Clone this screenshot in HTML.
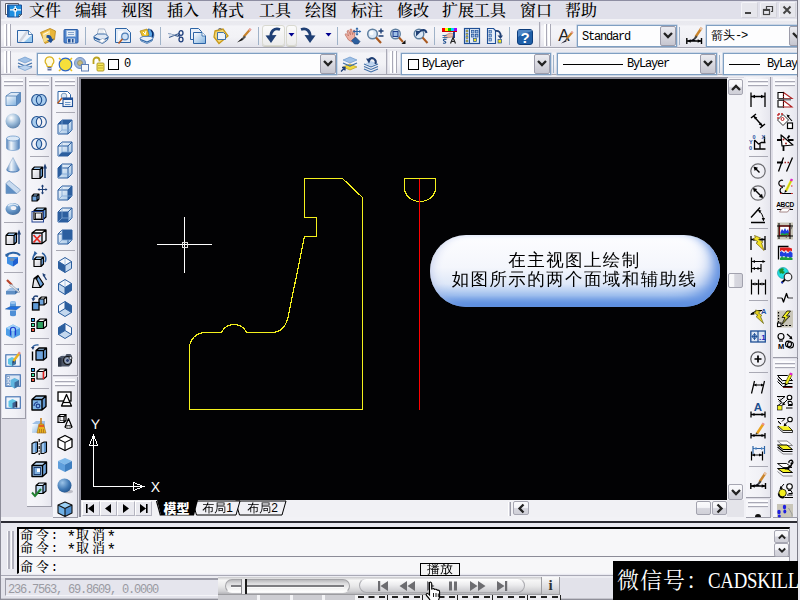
<!DOCTYPE html><html lang="zh"><head><meta charset="utf-8"><title>CAD</title><style>
*{box-sizing:border-box;margin:0;padding:0}
html,body{width:800px;height:600px;overflow:hidden;background:#dedde6;font-family:"Liberation Sans","WenQuanYi Zen Hei","Noto Sans CJK SC",sans-serif;}
.a{position:absolute}
#menubar{left:0;top:0;width:800px;height:21px;background:linear-gradient(#8e8ea2 0,#8e8ea2 1px,#e0e0ea 1px,#e0e0ea 19px,#f2f2f6 19px);}
.mi{position:absolute;top:1px;margin-left:-1px;font-size:16px;line-height:20px;color:#000;white-space:nowrap;font-family:"Liberation Serif","Noto Serif CJK SC",serif;font-weight:500}
.tb{position:absolute;background:linear-gradient(#e9e9ef 0,#eaeaf0 10%,#f4f4f8 17%,#f2f2f6 60%,#e4e4ec 100%);}
.vtb{position:absolute;background:linear-gradient(90deg,#f6f6fa,#f1f1f6 60%,#e6e6ee);}
.grip{position:absolute;width:7px;}
.grip i{position:absolute;top:0;bottom:0;width:3px;background:#fff;border-right:1px solid #a9a9b6}
.hgrip{position:absolute;height:8px;background:#e4e4ea}
.hgrip i{position:absolute;left:0;right:0;height:3px;background:#fcfcfe;border-bottom:1px solid #a9a9b6;}
.sep{position:absolute;width:1px;background:#9fb2c8;}
.hsep{position:absolute;height:1px;background:#a9a9b4;}
.dd{position:absolute;background:#fdfdfe;border:1px solid #7f9fc2;box-shadow:0 0 0 .5px #a9c0da}
.ddb{position:absolute;right:0px;top:0px;bottom:0px;width:16px;background:linear-gradient(#ececf1,#c6c6d0);border:1px solid #9c9caa;border-radius:2px}

.mono{position:absolute;font-family:"Liberation Mono","WenQuanYi Zen Hei Mono","Noto Sans Mono CJK SC",monospace;font-size:10px;line-height:12px;color:#000;white-space:nowrap}
svg{position:absolute;overflow:visible}
.ic{position:absolute;width:16px;height:16px}
</style></head><body>
<svg width="0" height="0" style="left:0;top:0"><defs>
<linearGradient id="gb" x1="0" y1="0" x2="1" y2="1"><stop offset="0" stop-color="#ffffff"/><stop offset="1" stop-color="#7fb0de"/></linearGradient>
<linearGradient id="gb2" x1="0" y1="0" x2="1" y2="1"><stop offset="0" stop-color="#e8f1fa"/><stop offset="1" stop-color="#4f86c0"/></linearGradient>
<linearGradient id="gw" x1="0" y1="0" x2="1" y2="1"><stop offset="0" stop-color="#ffffff"/><stop offset="1" stop-color="#c9c9d2"/></linearGradient>
<linearGradient id="gcyl" x1="0" y1="0" x2="1" y2="0"><stop offset="0" stop-color="#4f7fb8"/><stop offset=".35" stop-color="#f4f8fc"/><stop offset=".6" stop-color="#b4cce6"/><stop offset="1" stop-color="#4f7fb8"/></linearGradient>
<radialGradient id="gsph" cx=".38" cy=".3" r=".75"><stop offset="0" stop-color="#ffffff"/><stop offset=".55" stop-color="#9bbbd9"/><stop offset="1" stop-color="#5a7fa8"/></radialGradient>
<radialGradient id="gsph2" cx=".35" cy=".3" r=".8"><stop offset="0" stop-color="#9cc4e8"/><stop offset=".6" stop-color="#3f78b4"/><stop offset="1" stop-color="#1f4f86"/></radialGradient>
<linearGradient id="gpill" x1="0" y1="0" x2="0" y2="1"><stop offset="0" stop-color="#ffffff"/><stop offset=".55" stop-color="#e8eef8"/><stop offset=".8" stop-color="#a9c6ee"/><stop offset="1" stop-color="#5b8ede"/></linearGradient>
<linearGradient id="gbtn" x1="0" y1="0" x2="0" y2="1"><stop offset="0" stop-color="#fdfdfd"/><stop offset=".5" stop-color="#e4e4e6"/><stop offset="1" stop-color="#b9b9bd"/></linearGradient>
</defs></svg>
<div id="menubar" class="a">
<span class="mi" style="left:30px">文件</span>
<span class="mi" style="left:76px">编辑</span>
<span class="mi" style="left:122px">视图</span>
<span class="mi" style="left:168px">插入</span>
<span class="mi" style="left:213px">格式</span>
<span class="mi" style="left:260px">工具</span>
<span class="mi" style="left:306px">绘图</span>
<span class="mi" style="left:352px">标注</span>
<span class="mi" style="left:398px">修改</span>
<span class="mi" style="left:443px">扩展工具</span>
<span class="mi" style="left:521px">窗口</span>
<span class="mi" style="left:566px">帮助</span>
</div>
<svg class="a" style="left:4px;top:2px" width="19" height="17" viewBox="0 0 19 17"><rect x="0.500" y="0.500" width="18" height="16.500" fill="#ececf4"/><path d="M1.500 1.500h13v11h-13z" fill="#fff" stroke="#5c5c66" stroke-width="1"/><path d="M3.500 3h14v9.500l-2.500 2.500H3.500z" fill="#1f8fe0" stroke="#1f4f96" stroke-width="1"/><path d="M3.500 3h2v12h-2z" fill="#1f5fa8"/><path d="M11.200 4v10.500M6 7.800h11" stroke="#fff" stroke-width="1.300"/><rect x="9.500" y="6" width="3.400" height="3.600" fill="#fff"/><circle cx="11.300" cy="7.600" r=".8" fill="#000"/><path d="M15 15v-2.500h2.500z" fill="#f4f4f4" stroke="#333" stroke-width=".6"/></svg>
<div class="a" style="left:741px;top:2px;width:17px;height:16px;background:#e6e6ec;border:1px solid #d2d2da;border-top-color:#f4f4f8;border-left-color:#f4f4f8;border-radius:2px"></div>
<div class="a" style="left:760px;top:2px;width:17px;height:16px;background:#e6e6ec;border:1px solid #d2d2da;border-top-color:#f4f4f8;border-left-color:#f4f4f8;border-radius:2px"></div>
<div class="a" style="left:779px;top:2px;width:17px;height:16px;background:#e6e6ec;border:1px solid #d2d2da;border-top-color:#f4f4f8;border-left-color:#f4f4f8;border-radius:2px"></div>
<svg class="a" style="left:741px;top:2px" width="56" height="16" viewBox="0 0 56 16"><rect x="4" y="10" width="6" height="2" fill="#444"/><path d="M25.5 7V4.5h6v5H30" fill="none" stroke="#444" stroke-width="1.2"/><rect x="22.5" y="7.5" width="6" height="5" fill="none" stroke="#444" stroke-width="1.2"/><rect x="22" y="7" width="7" height="2" fill="#444"/><path d="M42.5 4.5l7 7M49.5 4.5l-7 7" stroke="#444" stroke-width="2"/></svg>
<div class="a" style="left:0px;top:21px;width:800px;height:1px;background:#e9e9ef;"></div>
<div class="tb" style="left:1px;top:22px;width:538px;height:25px"></div>
<div class="a" style="left:539px;top:22px;width:1px;height:25px;background:#a9a9b6;"></div>
<div class="tb" style="left:541px;top:22px;width:259px;height:25px"></div>
<div class="a" style="left:0px;top:47px;width:800px;height:1px;background:#a6a6b2;"></div>
<div class="a" style="left:0px;top:48px;width:800px;height:1px;background:#f6f6fa;"></div>
<div class="tb" style="left:1px;top:49px;width:385px;height:25px"></div>
<div class="a" style="left:386px;top:49px;width:1px;height:25px;background:#a9a9b6;"></div>
<div class="tb" style="left:388px;top:49px;width:412px;height:25px"></div>
<div class="a" style="left:0px;top:74px;width:800px;height:1px;background:#a6a6b2;"></div>
<div class="a" style="left:0px;top:75px;width:800px;height:2px;background:#eeeef3;"></div>
<div class="grip" style="left:4px;top:24px;height:22px"><i style="left:0"></i><i style="left:4px"></i></div>
<div class="grip" style="left:544px;top:24px;height:22px"><i style="left:0"></i><i style="left:4px"></i></div>
<div class="grip" style="left:4px;top:51px;height:22px"><i style="left:0"></i><i style="left:4px"></i></div>
<div class="grip" style="left:390px;top:51px;height:22px"><i style="left:0"></i><i style="left:4px"></i></div>
<div class="sep" style="left:553px;top:55px;height:18px"></div>
<div class="sep" style="left:719px;top:55px;height:18px"></div>
<div class="sep" style="left:85px;top:27px;height:18px"></div>
<div class="sep" style="left:160px;top:27px;height:18px"></div>
<div class="sep" style="left:258px;top:27px;height:18px"></div>
<div class="sep" style="left:337px;top:27px;height:18px"></div>
<div class="sep" style="left:434px;top:27px;height:18px"></div>
<div class="sep" style="left:509px;top:27px;height:18px"></div>
<svg class="ic" style="left:516.5px;top:28.5px" width="15" height="15" viewBox="0 0 16 16"><rect x="0.500" y="0.500" width="15" height="15" rx="2.500" fill="#1f5fa8" stroke="#0d3d7c"/><path d="M1 8c4-4 9-4 14-6v-1H1z" fill="#6fa0d8" opacity=".6"/><text x="8" y="13.500" font-family="Liberation Sans,sans-serif" font-size="15" font-weight="bold" fill="#fff" text-anchor="middle">?</text></svg>
<div class="a" style="left:262px;top:25px;width:23px;height:21px;background:linear-gradient(#fbfbfb,#ececec);border:1px solid #d9d9d0;border-radius:3px;box-shadow:0 1px 0 #c9c9c0"></div>
<div class="a" style="left:286px;top:25px;width:11px;height:21px;background:linear-gradient(#fbfbfb,#ececec);border:1px solid #d9d9d0;border-radius:3px;box-shadow:0 1px 0 #c9c9c0"></div>
<svg class="ic" style="left:265px;top:26.5px" width="19" height="19" viewBox="0 0 16 16"><path d="M15 2.500C9 .5 5.500 4.500 6 9.500" fill="none" stroke="#1f3f74" stroke-width="2.800"/><path d="M.5 8.500l11-.5-5.500 8z" fill="#1f3f74"/></svg>
<svg class="ic" style="left:17px;top:27.5px" width="16" height="16" viewBox="0 0 16 16"><path d="M0.500 2.500h11l4 4v8H0.500z" fill="#eef3fa" stroke="#2c64a6"/><path d="M1 14L9 3h3L4 14z" fill="#c9ccd6" opacity=".8"/><path d="M7 14l8-7v7z" fill="#8fc4ec" opacity=".9"/><path d="M11.500 2.500v4h4" fill="#fff" stroke="#2c64a6" stroke-width=".8"/></svg>
<svg class="ic" style="left:40px;top:27.5px" width="16" height="16" viewBox="0 0 16 16"><path d="M.5 4.500l9.500-4 5.500 2.500-1 8.500-9.500 4z" fill="#e9b63a" stroke="#b9851a" stroke-width=".8"/><path d="M2.500 5.500l7.500-3.500v9l-6.500 3.500z" fill="#f7dc8a"/><path d="M3.500 6.500l5-2.500" stroke="#fff" stroke-width=".8"/><path d="M6.500 7.500c3-1.500 5.500.5 5.500 3.500l2-.5-3 4.500-4-2.500 2-.5c0-1.500-1-2.500-2.500-2z" fill="#1f4f96"/></svg>
<svg class="ic" style="left:63px;top:27.5px" width="16" height="16" viewBox="0 0 16 16"><rect x="1" y="1.500" width="14" height="13.500" rx="1" fill="#4f84cc" stroke="#2c5fa8"/><rect x="3.500" y="2.500" width="9" height="6" fill="#e6eef8" stroke="#9fb9d9" stroke-width=".6"/><path d="M5 4.500h6M5 6.500h6" stroke="#6f93c2" stroke-width=".8"/><rect x="4" y="10.500" width="8" height="4.500" fill="#c9d6e8"/><rect x="5" y="11" width="2.500" height="3.500" fill="#1f4f96"/><rect x="9" y="11" width="1.500" height="3.500" fill="#1f4f96"/></svg>
<svg class="ic" style="left:92.5px;top:27.5px" width="16" height="16" viewBox="0 0 16 16"><path d="M4 8l1.500-7h6l2.500 6z" fill="#fff" stroke="#8fa0b8" stroke-width=".8"/><path d="M6.500 3h4M6 5h5" stroke="#c4ccd8" stroke-width=".7"/><path d="M.8 8.500l3.500-2.500h8l3 2.500-.8 3.500-5 3.500-8-3.500z" fill="#dfe8f4" stroke="#3f6fa8" stroke-width="1"/><path d="M1 9.500l8 3.500 6-3.500" fill="none" stroke="#2c5f9f" stroke-width="1.400"/><path d="M5.500 13l4-2.500 3.500 1.500-4 3z" fill="#fff" stroke="#8fa0b8" stroke-width=".6"/></svg>
<svg class="ic" style="left:115px;top:27.5px" width="16" height="16" viewBox="0 0 16 16"><path d="M0.500 0.500h11l4 4v10H0.500z" fill="#e3ecf7" stroke="#2c64a6"/><path d="M3 13L9 3h-6z" fill="#fff" opacity=".7"/><circle cx="10" cy="8.500" r="3.300" fill="#cfe2f6" stroke="#4f7fb8" stroke-width="1.200"/><path d="M7.500 11l-4 4.500" stroke="#b9581f" stroke-width="1.600"/></svg>
<svg class="ic" style="left:138.5px;top:27.5px" width="16" height="16" viewBox="0 0 16 16"><path d="M9 1a6 6 0 0 1 5 9l-5-2z" fill="#5aa7e6" stroke="#1f4f96" stroke-width=".8"/><path d="M12 2c2 2 2 5 1 7" stroke="#0d2f6c" stroke-width="1.400" fill="none"/><path d="M1 3l7-2 2 6-6 3z" fill="#e9c02a" stroke="#a9851a" stroke-width=".7"/><path d="M4 4l2 2m1-3l-1 4" stroke="#fff" stroke-width="1"/><path d="M1 10l3-1.500h8l2 1.500-1 3-5 2.500-6-2.500z" fill="#e6eef8" stroke="#4f7fb8" stroke-width=".9"/><path d="M1.500 11.500l6.500 2.500 5.500-2.500" fill="none" stroke="#2c64a6" stroke-width="1.200"/></svg>
<svg class="ic" style="left:167.5px;top:27.5px" width="16" height="16" viewBox="0 0 16 16"><path d="M0.500 5.500l10 3M1 9.500l10-4" stroke="#3f5f8f" stroke-width="1.200"/><path d="M1 5.300l6 2-6 .4z" fill="#c9d6e8"/><ellipse cx="13" cy="5" rx="2" ry="2.300" fill="none" stroke="#1f3f7c" stroke-width="1.300"/><ellipse cx="13" cy="11.500" rx="2" ry="2.300" fill="none" stroke="#1f3f7c" stroke-width="1.300"/><path d="M10 7l2 1.500" stroke="#1f3f7c" stroke-width="1.300"/></svg>
<svg class="ic" style="left:190px;top:27.5px" width="16" height="16" viewBox="0 0 16 16"><path d="M0.500 0.500h8l3 3v8H0.500z" fill="#e9f0f9" stroke="#2c64a6"/><path d="M3.500 4.500h8.500l3.500 3.500v7.500H3.500z" fill="url(#gb)" stroke="#2c64a6"/><path d="M12 4.500v3.500h3.500" fill="#fff" stroke="#2c64a6" stroke-width=".8"/></svg>
<svg class="ic" style="left:213px;top:27.5px" width="16" height="16" viewBox="0 0 16 16"><path d="M2 3l8-2 5 7-9 7.500L1 9z" fill="#f3d777" stroke="#c99a1a" stroke-width="1.300"/><path d="M5 1.500q2-2.500 4 0" fill="none" stroke="#777" stroke-width="1"/><path d="M4.500 4.500h6l2 2v5h-8z" fill="#eef3fa" stroke="#2c64a6" stroke-width=".9"/></svg>
<svg class="ic" style="left:236px;top:27.5px" width="16" height="16" viewBox="0 0 16 16"><path d="M14.500 1l-7 8" stroke="#c9832a" stroke-width="2.200"/><path d="M14.800 .8l-1.500 1.800" stroke="#e9a0a0" stroke-width="2.200"/><path d="M8.500 7.500l-3 3 1.500 1.500 3-3z" fill="#555"/><path d="M6 10l-5 4.500 6-2.500z" fill="#111"/></svg>
<svg class="ic" style="left:344px;top:27.5px" width="16" height="16" viewBox="0 0 16 16"><path d="M1 6.500l1.200-1 2.300 2.500-1.500-5 1.500-.7 2 4.500-.5-5.500 1.600-.2 1 5.500 1-4.500 1.500.4-.6 6 1.500 2-4 3.500-3.500-2z" fill="#eeb0a2" stroke="#b9685a" stroke-width=".7"/><path d="M7.500 12.500l4-3.500 4.500 4.500-2 2.500h-3.500z" fill="#2c5f9f" stroke="#1f3f74" stroke-width=".6"/><path d="M13 .5v6M10 3.500h6" stroke="#2c64a6" stroke-width="1.200"/><path d="M13 -.8l1.600 2h-3.200zM13 7.800l1.600-2h-3.200zM8.700 3.500l2-1.600v3.200zM17.300 3.500l-2-1.600v3.200z" fill="#2c64a6"/></svg>
<svg class="ic" style="left:367px;top:27.5px" width="16" height="16" viewBox="0 0 16 16"><circle cx="5.500" cy="6" r="4.800" fill="#dbe8f6" stroke="#5f7f9f" stroke-width="1.500"/><circle cx="4.500" cy="5" r="2.200" fill="#fff" opacity=".8"/><path d="M9 9.500l5 5.500" stroke="#a9581f" stroke-width="2.200"/><path d="M11.500 3h5M14 .5v5M11.500 8h5" stroke="#1f3f74" stroke-width="1.400"/></svg>
<svg class="ic" style="left:390px;top:27.5px" width="16" height="16" viewBox="0 0 16 16"><circle cx="5.500" cy="6" r="4.800" fill="#dbe8f6" stroke="#5f7f9f" stroke-width="1.400"/><rect x="3" y="3.500" width="5" height="5" fill="#9fc0e6" stroke="#1f3f8f" stroke-width="1.100"/><path d="M9 9.500l4 4.500" stroke="#a9581f" stroke-width="2"/><path d="M15.500 12v4h-4z" fill="#111"/></svg>
<svg class="ic" style="left:412.5px;top:27.5px" width="16" height="16" viewBox="0 0 16 16"><circle cx="6" cy="6" r="4.800" fill="#dbe8f6" stroke="#5f7f9f" stroke-width="1.400"/><path d="M9.500 9.500l5 5.500" stroke="#a9581f" stroke-width="2"/><path d="M13.500 5C13 1.500 9 1 7 3.500" fill="none" stroke="#1f3f74" stroke-width="2"/><path d="M3 3h5.500v5.500z" fill="#1f3f74" transform="rotate(-90 5.750 5.750)"/></svg>
<svg class="ic" style="left:441px;top:27.5px" width="16" height="16" viewBox="0 0 16 16"><path d="M1 0h3v3H1z" fill="#f00"/><path d="M4 0h3v3H4z" fill="#ff0"/><path d="M7 0h3v3H7z" fill="#0c0"/><path d="M10 0h3v3h-3z" fill="#0cf"/><path d="M13 0h3v3h-3z" fill="#90f"/><path d="M1 3.500h15" stroke="#c00" stroke-width="1"/><path d="M3 8l6-3 4 1-2 3-6 1z" fill="#e9b7a6" stroke="#a9685a" stroke-width=".6"/><path d="M13 4v6" stroke="#1f3f8f" stroke-width="2"/><path d="M1.500 7.500h4M1.500 9.500h5" stroke="#3f6f9f" stroke-width="1"/><path d="M5.500 11.500c-3-1-4 1-2 1.800 2 .7 1.500 2.500-1.500 1.700" fill="none" stroke="#1f4f8f" stroke-width="1.200"/><path d="M9.500 15.500l2.500-6 2.500 6M10.300 13.500h3.400" fill="none" stroke="#222" stroke-width="1.200"/></svg>
<svg class="ic" style="left:464px;top:27.5px" width="16" height="16" viewBox="0 0 16 16"><rect x="0.500" y="0.500" width="15" height="15" fill="#e6eef8" stroke="#1f4f96" stroke-width="1.200"/><path d="M5.500 1v14" stroke="#1f4f96" stroke-width="1"/><g fill="#f3d21f" stroke="#1f4f96" stroke-width=".5"><rect x="2" y="2" width="2" height="2"/><rect x="2" y="5.300" width="2" height="2"/><rect x="2" y="8.600" width="2" height="2"/><rect x="2" y="12" width="2" height="2"/></g><g fill="#9fc0e6" stroke="#1f4f96" stroke-width=".7"><rect x="7.500" y="2.500" width="2.500" height="2.500"/><rect x="11.500" y="2.500" width="2.500" height="2.500"/><rect x="7.500" y="6.500" width="2.500" height="2.500"/><rect x="11.500" y="6.500" width="2.500" height="2.500"/></g><rect x="9.500" y="10.500" width="3" height="3" fill="#f3e21f" stroke="#1f4f96" stroke-width=".7"/></svg>
<svg class="ic" style="left:487px;top:27.5px" width="16" height="16" viewBox="0 0 16 16"><path d="M0.500 0.500h6l2 2v13h-8z" fill="#e6eef8" stroke="#1f4f96" stroke-width="1.100"/><g fill="#9fc0e6" stroke="#1f4f96" stroke-width=".6"><rect x="2" y="2.500" width="2.500" height="2.500"/><rect x="2" y="6.500" width="2.500" height="2.500"/><rect x="2" y="10.500" width="2.500" height="2.500"/></g><path d="M8 3c4-1 6 2 5.500 5" fill="none" stroke="#1f3f74" stroke-width="1.800"/><path d="M10.500 7.500h5.500l-2.500 3.500z" fill="#1f3f74"/><rect x="11" y="11.500" width="3.500" height="3.500" fill="#f3e21f" stroke="#1f4f96" stroke-width=".7"/></svg>
<svg class="ic" style="left:300px;top:26.5px" width="19" height="19" viewBox="0 0 16 16"><path d="M1 2.500C7 .5 10.500 4.500 10 9.500" fill="none" stroke="#1f3f74" stroke-width="2.800"/><path d="M15.500 8.500l-11-.5 5.500 8z" fill="#1f3f74"/></svg>
<svg class="a" style="left:288px;top:33px" width="8" height="4"><path d="M0.500 0h6L3.500 3.500z" fill="#00008f"/></svg>
<svg class="a" style="left:325px;top:33px" width="8" height="4"><path d="M0.500 0h6L3.500 3.500z" fill="#00008f"/></svg>
<svg class="ic" style="left:558px;top:28px" width="16" height="16" viewBox="0 0 16 16"><text x="5.800" y="13" font-size="17" fill="#222" text-anchor="middle" font-family="Liberation Sans,sans-serif">A</text><path d="M14.500 4l-6 7" stroke="#c9832a" stroke-width="2"/><path d="M14.800 3.700l-1.200 1.400" stroke="#e9a0a0" stroke-width="2"/><path d="M9 10l-2 2 1 1 2-2z" fill="#555"/><path d="M7.500 12l-4.500 3.500 5.500-2z" fill="#223"/></svg>
<div class="dd" style="left:577px;top:25px;width:100px;height:22px"><span class="mono" style="left:4px;top:5px;font-size:12px;letter-spacing:-1.200px">Standard</span><div class="ddb"><svg style="left:2px;top:5px" width="10" height="7" viewBox="0 0 10 7"><path d="M1 1l4 4 4-4" fill="none" stroke="#222" stroke-width="2.300"/></svg></div></div>
<div class="sep" style="left:679px;top:27px;height:18px"></div>
<svg class="ic" style="left:686px;top:28px" width="16" height="16" viewBox="0 0 16 16"><path d="M15.500 0l-6 9" stroke="#c9832a" stroke-width="2.400"/><path d="M15.800 -.5l-1.500 2.200" stroke="#e9c0a0" stroke-width="2.400"/><path d="M10 7.500l-2.500 3 1.500 1.200 2.500-3z" fill="#444"/><path d="M8 10.500l-5 2.500h6.500z" fill="#112"/><path d="M0.800 10v6M15.500 10v6M1 13h14.500" stroke="#000" stroke-width="1.400" fill="none"/><path d="M1.200 13l3.500-1.800v3.600zM15.200 13l-3.500-1.800v3.600z" fill="#000"/></svg>
<div class="dd" style="left:706px;top:25px;width:100px;height:22px"><span class="mono" style="left:4px;top:3px;font-size:12px;line-height:14px">箭头<span style="letter-spacing:-1.200px">-&gt;</span></span><div class="ddb"><svg style="left:2px;top:5px" width="10" height="7" viewBox="0 0 10 7"><path d="M1 1l4 4 4-4" fill="none" stroke="#222" stroke-width="2.300"/></svg></div></div>
<svg class="ic" style="left:17px;top:56px" width="16" height="16" viewBox="0 0 16 16"><path d="M8 1l7 3-7 3-7-3z" fill="#9fc0e6" stroke="#5f8fc4" stroke-width=".6"/><path d="M1 7l7 3 7-3M1 10l7 3 7-3" fill="none" stroke="#3f6fa8" stroke-width="1.300"/><path d="M1 13l7 3 7-3-7-2.500z" fill="#bcd3ee" stroke="#5f8fc4" stroke-width=".6" transform="translate(0,-1.500)"/></svg>
<div class="dd" style="left:37px;top:53px;width:300px;height:22px"><svg style="left:6px;top:2px" width="70" height="17" viewBox="0 0 70 17"><path d="M5.500 .8a4.300 4.300 0 0 1 3 7.400l-.7 2.300h-4.600l-.7-2.300a4.300 4.300 0 0 1 3-7.400z" fill="#fffbe0" stroke="#d9b21f" stroke-width="1.200"/><rect x="3.500" y="11" width="4" height="3.500" fill="#5f6f9f"/><path d="M3.500 12.500h4" stroke="#fff" stroke-width=".6"/><circle cx="21.500" cy="8.500" r="6.300" fill="#f6df3a" stroke="#2c64c6" stroke-width="1.200"/><path d="M15 2l2 2M28 2l-2 2M15 15l2-2M28 15l-2-2" stroke="#e9c21f" stroke-width="1.500"/><circle cx="36" cy="7" r="5.500" fill="#9fb6d9" stroke="#6f8fc4" stroke-width="1"/><circle cx="36" cy="7" r="2.500" fill="#c9b97a" stroke="#8f8f6f" stroke-width=".8"/><rect x="37.500" y="8.500" width="7" height="6.500" fill="#f4f6fa" stroke="#5f7fb4" stroke-width="1"/><path d="M49.500 8V4.500a3 3 0 0 1 6 0V5.500" fill="none" stroke="#b9a21f" stroke-width="1.800"/><rect x="53" y="7" width="7" height="8" rx="1" fill="#f3e45a" stroke="#a9921f" stroke-width=".9"/><path d="M54 9.500h5M54 12h5" stroke="#b9a21f" stroke-width=".8"/></svg><div class="a" style="left:70px;top:5px;width:11px;height:11px;border:1px solid #000;background:#fff"></div><span class="mono" style="left:86px;top:4px;font-size:12px">0</span><div class="ddb"><svg style="left:2px;top:5px" width="10" height="7" viewBox="0 0 10 7"><path d="M1 1l4 4 4-4" fill="none" stroke="#222" stroke-width="2.300"/></svg></div></div>
<svg class="ic" style="left:341px;top:56px" width="16" height="16" viewBox="0 0 16 16"><path d="M8 6l7 3-7 3-7-3z" fill="#f3d83a" stroke="#a9921f" stroke-width=".6" transform="translate(1,2)"/><path d="M9 1l7 3-7 3-7-3z" fill="#9fc0e6" stroke="#5f8fc4" stroke-width=".6"/><path d="M2 7l7 3 7-3" fill="none" stroke="#3f6fa8" stroke-width="1.200"/><path d="M0 15.500l3.500-3.500M1 11.500h3v3" fill="none" stroke="#1f3f74" stroke-width="1.300"/></svg>
<svg class="ic" style="left:363px;top:56px" width="16" height="16" viewBox="0 0 16 16"><path d="M1 8l7 3 7-3M1 10.500l7 3 7-3M1 13l7 3 7-3" fill="none" stroke="#3f6fa8" stroke-width="1.100"/><path d="M8 5l6 2.500-6 2.500-6-2.500z" fill="#bcd3ee"/><path d="M12.500 8C14 3 9 .5 6 3.500" fill="none" stroke="#1f3f74" stroke-width="2"/><path d="M3 2.500l5 .5-2 4.500z" fill="#1f3f74"/></svg>
<div class="dd" style="left:401px;top:53px;width:150px;height:22px"><div class="a" style="left:6px;top:5px;width:11px;height:11px;border:1px solid #000;background:#fff"></div><span class="mono" style="left:20px;top:4px;font-size:12px;letter-spacing:-1.200px">ByLayer</span><div class="ddb"><svg style="left:2px;top:5px" width="10" height="7" viewBox="0 0 10 7"><path d="M1 1l4 4 4-4" fill="none" stroke="#222" stroke-width="2.300"/></svg></div></div>
<div class="dd" style="left:557px;top:53px;width:160px;height:22px"><div class="a" style="left:5px;top:10px;width:60px;height:1px;background:#000"></div><span class="mono" style="left:69px;top:4px;font-size:12px;letter-spacing:-1.200px">ByLayer</span><div class="ddb"><svg style="left:2px;top:5px" width="10" height="7" viewBox="0 0 10 7"><path d="M1 1l4 4 4-4" fill="none" stroke="#222" stroke-width="2.300"/></svg></div></div>
<div class="dd" style="left:723px;top:53px;width:100px;height:22px"><div class="a" style="left:5px;top:10px;width:31px;height:1px;background:#000"></div><span class="mono" style="left:43px;top:4px;font-size:12px;letter-spacing:-1.200px">ByLayer</span><div class="ddb"><svg style="left:2px;top:5px" width="10" height="7" viewBox="0 0 10 7"><path d="M1 1l4 4 4-4" fill="none" stroke="#222" stroke-width="2.300"/></svg></div></div>
<div class="a" style="left:79px;top:77px;width:649px;height:2px;background:#8c8c98;"></div>
<div class="a" style="left:79px;top:77px;width:2px;height:440px;background:#8c8c98;"></div>
<div class="a" style="left:81px;top:79px;width:646px;height:421px;background:#020204;"></div>
<svg class="a" style="left:0;top:0" width="800" height="600" viewBox="0 0 800 600" shape-rendering="crispEdges">
<path d="M304.500 178.500H342.500L362.500 197.500V409.500H189.500V348.500A15.500 15.500 0 0 1 205 332.500H221.500A13.800 13.800 0 0 1 246.500 332.500H272Q285.500 332 288.500 315L304.500 236.500H316.500V217.500H304.500Z" fill="none" stroke="#f4f01c" stroke-width="1.200"/>
<path d="M404.500 178.500H435.500V188A15.500 13.500 0 0 1 404.500 188Z" fill="none" stroke="#f4f01c" stroke-width="1.200"/>
<path d="M419.500 179V409.500" stroke="#f00" stroke-width="1.300"/>
<path d="M157 244.500H212M184.500 217V272.500" stroke="#fff" stroke-width="1"/>
<rect x="182" y="242" width="5" height="5" fill="none" stroke="#ddd" stroke-width="1"/>
<g stroke="#fff" stroke-width="1" fill="none">
<path d="M93.500 486.500V435M93.500 486.500H143"/>
<path d="M93.500 435l-4 10h8zM143.500 486.500l-10-4v8z"/>
</g>
<text x="95.500" y="428.500" font-size="14" fill="#fff" text-anchor="middle" font-family="Liberation Sans,sans-serif" style="text-rendering:geometricPrecision">Y</text>
<text x="155.500" y="492" font-size="14" fill="#fff" text-anchor="middle" font-family="Liberation Sans,sans-serif">X</text>
</svg>
<div class="a" style="left:430px;top:235px;width:290px;height:72px;border-radius:36px;background:linear-gradient(#fdfdff 0%,#f4f6fc 45%,#dfe8f8 68%,#a9c6f0 84%,#5f92e0 96%,#4f84d8 100%);box-shadow:inset -12px -10px 16px -6px #5f8fe0, inset -6px 0 8px -4px #8fb0ea, inset 8px 0 10px -6px #c9d2ee"></div>
<div class="a" style="left:429px;top:250.500px;width:291px;text-align:center;font-size:17.500px;letter-spacing:1.400px;line-height:19.300px;color:#000;white-space:nowrap;font-family:'Liberation Sans','WenQuanYi Zen Hei','Noto Sans CJK SC',sans-serif">在主视图上绘制<br>如图所示的两个面域和辅助线</div>
<div class="a" style="left:727px;top:78px;width:17px;height:422px;background:#f4f4f8;"></div>
<div class="a" style="left:728px;top:79px;width:15px;height:16px;background:linear-gradient(#fafafc 0%,#f4f4f8 45%,#d6d6de 55%,#d0d0d8 100%);border:1px solid #a6a6b2;border-radius:2px"><svg style="left:1.5px;top:3.5px;transform:rotate(180deg) scale(1)" width="10" height="7" viewBox="0 0 10 7"><path d="M1 1l4 4 4-4" fill="none" stroke="#222" stroke-width="2.300"/></svg></div>
<div class="a" style="left:728px;top:484px;width:15px;height:16px;background:linear-gradient(#fafafc 0%,#f4f4f8 45%,#d6d6de 55%,#d0d0d8 100%);border:1px solid #a6a6b2;border-radius:2px"><svg style="left:1.5px;top:3.5px;transform:rotate(0deg) scale(1)" width="10" height="7" viewBox="0 0 10 7"><path d="M1 1l4 4 4-4" fill="none" stroke="#222" stroke-width="2.300"/></svg></div>
<div class="a" style="left:728px;top:273px;width:15px;height:15px;background:linear-gradient(90deg,#fafafc 0%,#f6f6f8 35%,#d8d8e0 45%,#d2d2da 100%);border:1px solid #a2a2ae;border-radius:2px"></div>
<div class="a" style="left:81px;top:500px;width:646px;height:17px;background:#f1f1f5;"></div>
<div class="a" style="left:727px;top:500px;width:17px;height:17px;background:#e4e4ea;"></div>
<div class="a" style="left:508px;top:502px;width:3px;height:14px;background:#cfcfd8;border-left:1px solid #fff;border-right:1px solid #9c9ca8"></div>
<div class="a" style="left:513px;top:501px;width:16px;height:14px;background:linear-gradient(#fafafc 0%,#f4f4f8 45%,#d6d6de 55%,#d0d0d8 100%);border:1px solid #a6a6b2;border-radius:2px"><svg style="left:2px;top:2.5px;transform:rotate(90deg) scale(1)" width="10" height="7" viewBox="0 0 10 7"><path d="M1 1l4 4 4-4" fill="none" stroke="#222" stroke-width="2.300"/></svg></div>
<div class="a" style="left:712px;top:501px;width:15px;height:14px;background:linear-gradient(#fafafc 0%,#f4f4f8 45%,#d6d6de 55%,#d0d0d8 100%);border:1px solid #a6a6b2;border-radius:2px"><svg style="left:1.5px;top:2.5px;transform:rotate(-90deg) scale(1)" width="10" height="7" viewBox="0 0 10 7"><path d="M1 1l4 4 4-4" fill="none" stroke="#222" stroke-width="2.300"/></svg></div>
<div class="a" style="left:696px;top:501px;width:15px;height:14px;background:linear-gradient(#fafafc 0%,#f4f4f8 45%,#d6d6de 55%,#d0d0d8 100%);border:1px solid #a2a2ae;border-radius:2px"></div>
<div class="a" style="left:82px;top:501px;width:17.500px;height:15px;background:#e9e9ef;border:1px solid #b4b4c0;border-left-color:#fff;border-top-color:#fff"></div>
<div class="a" style="left:99.5px;top:501px;width:17.500px;height:15px;background:#e9e9ef;border:1px solid #b4b4c0;border-left-color:#fff;border-top-color:#fff"></div>
<div class="a" style="left:117px;top:501px;width:17.500px;height:15px;background:#e9e9ef;border:1px solid #b4b4c0;border-left-color:#fff;border-top-color:#fff"></div>
<div class="a" style="left:134.5px;top:501px;width:17.500px;height:15px;background:#e9e9ef;border:1px solid #b4b4c0;border-left-color:#fff;border-top-color:#fff"></div>
<svg class="a" style="left:82px;top:501px" width="72" height="15" viewBox="0 0 72 15"><g fill="#000">
<path d="M4 3h1.600v9H4zM12 3v9L6 7.500z"/><path d="M29 3v9L23 7.500z"/><path d="M41 3v9l6-4.500z"/><path d="M58 3v9l6-4.500zM64 3h1.600v9H64z"/></g></svg>
<svg class="a" style="left:155px;top:500px" width="140" height="17" viewBox="0 0 140 17">
<path d="M80.500 1h50.500l-4 14H84.500z" fill="#f1f1f5" stroke="#000" stroke-width="1"/>
<path d="M37.500 1h47.500l-4 14H41.500z" fill="#f1f1f5" stroke="#000" stroke-width="1"/>
<path d="M2 0h41l-4 15.500H6z" fill="#000"/><path d="M1.500 1l4 14.500" stroke="#000" stroke-width="1.200"/>
<text x="21.500" y="12.500" font-size="13" font-weight="900" fill="#fff" text-anchor="middle" font-family="Liberation Sans,Noto Sans CJK SC,sans-serif">模型</text>
<text x="62.500" y="12" font-size="12" fill="#000" text-anchor="middle" font-family="Liberation Sans,WenQuanYi Zen Hei,Noto Sans CJK SC,sans-serif">布局1</text>
<text x="107.500" y="12" font-size="12" fill="#000" text-anchor="middle" font-family="Liberation Sans,WenQuanYi Zen Hei,Noto Sans CJK SC,sans-serif">布局2</text>
</svg>
<div class="a" style="left:0px;top:517px;width:800px;height:4px;background:#f2f2f6;"></div>
<div class="a" style="left:0px;top:521px;width:798px;height:2px;background:#2c2c34;"></div>
<div class="a" style="left:0px;top:523px;width:800px;height:1px;background:#c4c4cc;"></div>
<div class="a" style="left:0px;top:523px;width:800px;height:54px;background:#e9e9f0;"></div>
<div class="a" style="left:17px;top:527px;width:773px;height:47px;background:#f7f7f9;border-left:2px solid #000;border-top:2px solid #000;border-right:1px solid #9c9ca8;border-bottom:1px solid #f4f4f8"></div>
<div class="a" style="left:19px;top:556px;width:770px;height:1px;background:#8c8c98;"></div>
<div class="a" style="left:7px;top:531px;width:3px;height:38px;background:#fafafc;border-right:2px solid #b0b0bc"></div>
<div class="a" style="left:11px;top:531px;width:3px;height:38px;background:#fafafc;border-right:2px solid #b0b0bc"></div>
<div class="a" style="left:18.500px;top:529px;height:13px;font-size:13px;line-height:13px;color:#000;white-space:nowrap;font-family:'Liberation Mono','Noto Serif CJK SC',monospace;font-weight:500"><span style="position:absolute;left:0px;width:16px;text-align:center;">命</span><span style="position:absolute;left:16px;width:16px;text-align:center;">令</span><span style="position:absolute;left:32px;width:8px;text-align:center;">:</span><span style="position:absolute;left:48px;width:8px;text-align:center;top:3px;font-size:16px;">*</span><span style="position:absolute;left:56px;width:16px;text-align:center;">取</span><span style="position:absolute;left:72px;width:16px;text-align:center;">消</span><span style="position:absolute;left:88px;width:8px;text-align:center;top:3px;font-size:16px;">*</span></div>
<div class="a" style="left:18.500px;top:541.5px;height:13px;font-size:13px;line-height:13px;color:#000;white-space:nowrap;font-family:'Liberation Mono','Noto Serif CJK SC',monospace;font-weight:500"><span style="position:absolute;left:0px;width:16px;text-align:center;">命</span><span style="position:absolute;left:16px;width:16px;text-align:center;">令</span><span style="position:absolute;left:32px;width:8px;text-align:center;">:</span><span style="position:absolute;left:48px;width:8px;text-align:center;top:3px;font-size:16px;">*</span><span style="position:absolute;left:56px;width:16px;text-align:center;">取</span><span style="position:absolute;left:72px;width:16px;text-align:center;">消</span><span style="position:absolute;left:88px;width:8px;text-align:center;top:3px;font-size:16px;">*</span></div>
<div class="a" style="left:18.500px;top:561px;height:13px;font-size:13px;line-height:13px;color:#000;white-space:nowrap;font-family:'Liberation Mono','Noto Serif CJK SC',monospace;font-weight:500"><span style="position:absolute;left:0px;width:16px;text-align:center;">命</span><span style="position:absolute;left:16px;width:16px;text-align:center;">令</span><span style="position:absolute;left:32px;width:8px;text-align:center;">:</span></div>
<div class="a" style="left:774px;top:530px;width:15px;height:13px;background:linear-gradient(#fafafc 0%,#f4f4f8 45%,#d6d6de 55%,#d0d0d8 100%);border:1px solid #a6a6b2;border-radius:2px"><svg style="left:1.5px;top:2px;transform:rotate(180deg) scale(0.8)" width="10" height="7" viewBox="0 0 10 7"><path d="M1 1l4 4 4-4" fill="none" stroke="#222" stroke-width="2.300"/></svg></div>
<div class="a" style="left:774px;top:543px;width:15px;height:14px;background:linear-gradient(#fafafc 0%,#f4f4f8 45%,#d6d6de 55%,#d0d0d8 100%);border:1px solid #a6a6b2;border-radius:2px"><svg style="left:1.5px;top:2.5px;transform:rotate(0deg) scale(0.8)" width="10" height="7" viewBox="0 0 10 7"><path d="M1 1l4 4 4-4" fill="none" stroke="#222" stroke-width="2.300"/></svg></div>
<div class="a" style="left:0px;top:575px;width:800px;height:1px;background:#a9a9b6;"></div>
<div class="a" style="left:0px;top:576px;width:800px;height:2px;background:#ececf2;"></div>
<div class="a" style="left:0px;top:578px;width:800px;height:22px;background:#e2e2ea;"></div>
<div class="a" style="left:5px;top:578px;width:214px;height:18px;border:1px solid #9c9ca8;border-top:2px solid #9c9ca8;border-right-color:#f4f4f8;border-bottom-color:#f4f4f8;background:#e5e5ed"></div>
<span class="mono" style="left:8px;top:584px;font-size:12px;letter-spacing:-1.200px;color:#9a9aa2">236.7563, 69.8609, 0.0000</span>
<div class="a" style="left:0px;top:598px;width:613px;height:1px;background:#c4c4cc;"></div>
<div class="a" style="left:0px;top:599px;width:613px;height:1px;background:#90909a;"></div>
<div class="a" style="left:218px;top:577px;width:342px;height:18px;background:linear-gradient(#c9c9cc 0%,#f6f6f6 18%,#e9e9ea 50%,#cfcfd2 80%,#a9a9ae 100%)"></div>
<div class="a" style="left:225px;top:579px;width:125px;height:14px;border-radius:7px;background:linear-gradient(#b9b9bc,#dcdcde 30%,#f4f4f4 75%,#fff);border:1px solid #a4a4a8;border-bottom-color:#f8f8f8"></div>
<div class="a" style="left:231px;top:585px;width:113px;height:2px;background:#7c7c80;border-bottom:1px solid #fafafa;height:3px"></div>
<div class="a" style="left:241px;top:579px;width:4px;height:15px;background:#ececee;border-left:1px solid #8c8c90"></div>
<div class="a" style="left:245px;top:579px;width:2px;height:15px;background:#1c1c1c;"></div>
<div class="a" style="left:359px;top:578px;width:166px;height:15px;border-radius:8px;background:linear-gradient(#ffffff,#ececee 45%,#c9c9cd 100%);border:1px solid #a9a9ae;border-top-color:#d9d9dc"></div>
<svg class="a" style="left:370px;top:579px" width="150" height="14" viewBox="0 0 150 14"><g fill="#6c6c70">
<path d="M8 2h2.200v10H8zM18 2v10L10.500 7z"/>
<path d="M37 2v10L29.500 7zM45 2v10L37.500 7z"/>
<path d="M57 2v10l7.500-5z"/>
<path d="M79 2.500h3v9h-3zM84 2.500h3v9h-3z"/>
<path d="M100 2v10l7.500-5zM108 2v10l7.500-5z"/>
<path d="M127 2v10l7.500-5zM135 2h2.200v10H135z"/>
</g></svg>
<div class="a" style="left:541px;top:577px;width:19px;height:18px;background:linear-gradient(#fafafa,#dcdcdf 60%,#bcbcc0);border-left:1px solid #9c9ca0;border-right:1px solid #9c9ca0"></div>
<span class="a" style="left:541px;top:577px;width:19px;text-align:center;font:bold 15px/17px 'Liberation Serif',serif;color:#333">i</span>
<div class="a" style="left:218px;top:594px;width:140px;height:6px;background:#cdcdd2;"></div>
<div class="a" style="left:218px;top:594px;width:342px;height:1px;background:#9c9ca0;"></div>
<div class="a" style="left:257px;top:595px;width:3px;height:5px;background:#f4f4f6;"></div>
<div class="a" style="left:290px;top:595px;width:3px;height:5px;background:#f4f4f6;"></div>
<div class="a" style="left:322px;top:595px;width:3px;height:5px;background:#f4f4f6;"></div>
<div class="a" style="left:355px;top:595px;width:3px;height:5px;background:#f4f4f6;"></div>
<div class="a" style="left:358px;top:595px;width:202px;height:5px;background:#ececf0;"></div>
<div class="a" style="left:358px;top:596px;width:27px;height:2px;background:transparent;border-top:2px dashed #222;height:0"></div>
<div class="a" style="left:387px;top:595px;width:1px;height:5px;background:#222;"></div>
<div class="a" style="left:392px;top:596px;width:28px;height:2px;background:transparent;border-top:2px dashed #222;height:0"></div>
<div class="a" style="left:422px;top:595px;width:1px;height:5px;background:#222;"></div>
<div class="a" style="left:428px;top:596px;width:27px;height:2px;background:transparent;border-top:2px dashed #222;height:0"></div>
<div class="a" style="left:457px;top:595px;width:1px;height:5px;background:#222;"></div>
<div class="a" style="left:462px;top:596px;width:28px;height:2px;background:transparent;border-top:2px dashed #222;height:0"></div>
<div class="a" style="left:492px;top:595px;width:1px;height:5px;background:#222;"></div>
<div class="a" style="left:497px;top:596px;width:28px;height:2px;background:transparent;border-top:2px dashed #222;height:0"></div>
<div class="a" style="left:527px;top:595px;width:1px;height:5px;background:#222;"></div>
<div class="a" style="left:530px;top:596px;width:28px;height:2px;background:transparent;border-top:2px dashed #222;height:0"></div>
<div class="a" style="left:560px;top:595px;width:1px;height:5px;background:#222;"></div>
<div class="a" style="left:420px;top:563px;width:40px;height:13px;background:#f4f4f4;border:1px solid #000;font-size:13px;line-height:11px;text-align:center;color:#000;overflow:hidden;font-family:'Liberation Sans','WenQuanYi Zen Hei','Noto Sans CJK SC',sans-serif"><span style="position:relative;top:-1px">播放</span></div>
<svg class="a" style="left:424px;top:581px" width="20" height="20" viewBox="0 0 20 20"><path d="M5.500 1.500c1.200-.8 2.200 0 2.200 1.200V8l1-.3c.8-.3 1.500 0 1.800.7l1-.2c.8-.1 1.500.3 1.700 1l.8-.1c1 0 1.600.6 1.600 1.600V15c0 1.500-.5 2.500-1 4v1H6.500c-1-2-2.500-4-4-5.500-.8-1-.2-2 .8-2 .8 0 1.500.6 2.200 1.500z" fill="#fff" stroke="#000" stroke-width="1.100"/><path d="M9.500 12v4M12 12v4M14.300 12.500v3.500" stroke="#000" stroke-width=".9"/></svg>
<div class="a" style="left:613px;top:561px;width:187px;height:39px;background:#000;"></div>
<div class="a" style="left:617px;top:567px;height:28px;font-size:22px;line-height:28px;color:#fff;white-space:nowrap;font-family:'Liberation Serif','Noto Serif CJK SC',serif"><span style="letter-spacing:1px">微信号</span><span style="display:inline-block;width:22px">：</span><span style="display:inline-block;font-size:23px;letter-spacing:-.300px;transform:scaleX(.818);transform-origin:0 50%">CADSKILL</span></div>
<div class="a" style="left:0px;top:0px;width:1px;height:600px;background:#8c8c98;"></div>
<div class="a" style="left:798px;top:0px;width:2px;height:600px;background:#e9e9f0;"></div>
<div class="a" style="left:797px;top:0px;width:1px;height:561px;background:#7c7c88;"></div>
<div class="vtb" style="left:2px;top:77px;width:23px;height:341px"></div><div class="a" style="left:25px;top:77px;width:1px;height:342px;background:#9c9ca8;"></div><div class="a" style="left:2px;top:418px;width:23px;height:1px;background:#9c9ca8;"></div>
<div class="vtb" style="left:27px;top:77px;width:24px;height:429px"></div><div class="a" style="left:51px;top:77px;width:1px;height:430px;background:#9c9ca8;"></div><div class="a" style="left:27px;top:506px;width:24px;height:1px;background:#9c9ca8;"></div>
<div class="vtb" style="left:53px;top:77px;width:24px;height:298px"></div><div class="a" style="left:77px;top:77px;width:1px;height:299px;background:#9c9ca8;"></div><div class="a" style="left:53px;top:375px;width:24px;height:1px;background:#9c9ca8;"></div>
<div class="vtb" style="left:53px;top:377px;width:24px;height:140px"></div><div class="a" style="left:77px;top:377px;width:1px;height:141px;background:#9c9ca8;"></div><div class="a" style="left:53px;top:517px;width:24px;height:1px;background:#9c9ca8;"></div>
<div class="hgrip" style="left:4px;top:79px;width:19px"><i style="top:0"></i><i style="top:4px"></i></div>
<div class="hgrip" style="left:29px;top:79px;width:20px"><i style="top:0"></i><i style="top:4px"></i></div>
<div class="hgrip" style="left:55px;top:79px;width:20px"><i style="top:0"></i><i style="top:4px"></i></div>
<div class="hgrip" style="left:55px;top:379px;width:20px"><i style="top:0"></i><i style="top:4px"></i></div>
<div class="vtb" style="left:746px;top:77px;width:24px;height:420px"></div><div class="a" style="left:770px;top:77px;width:1px;height:421px;background:#9c9ca8;"></div><div class="a" style="left:746px;top:497px;width:24px;height:1px;background:#9c9ca8;"></div>
<div class="vtb" style="left:746px;top:499px;width:24px;height:18px"></div><div class="a" style="left:770px;top:499px;width:1px;height:19px;background:#9c9ca8;"></div><div class="a" style="left:746px;top:517px;width:24px;height:1px;background:#9c9ca8;"></div>
<div class="vtb" style="left:773px;top:77px;width:24px;height:280px"></div><div class="a" style="left:797px;top:77px;width:1px;height:281px;background:#9c9ca8;"></div><div class="a" style="left:773px;top:357px;width:24px;height:1px;background:#9c9ca8;"></div>
<div class="vtb" style="left:773px;top:359px;width:24px;height:158px"></div><div class="a" style="left:797px;top:359px;width:1px;height:159px;background:#9c9ca8;"></div><div class="a" style="left:773px;top:517px;width:24px;height:1px;background:#9c9ca8;"></div>
<div class="hgrip" style="left:748px;top:79px;width:20px"><i style="top:0"></i><i style="top:4px"></i></div>
<div class="hgrip" style="left:775px;top:79px;width:20px"><i style="top:0"></i><i style="top:4px"></i></div>
<div class="hgrip" style="left:748px;top:500px;width:20px"><i style="top:0"></i><i style="top:4px"></i></div>
<div class="hgrip" style="left:775px;top:361px;width:20px"><i style="top:0"></i><i style="top:4px"></i></div>
<div class="a" style="left:744px;top:77px;width:2px;height:440px;background:#f1f1f6;"></div>
<div class="hsep" style="left:4px;top:222px;width:19px"></div>
<div class="hsep" style="left:4px;top:272px;width:19px"></div>
<div class="hsep" style="left:4px;top:344px;width:19px"></div>
<div class="hsep" style="left:30px;top:156px;width:19px"></div>
<div class="hsep" style="left:30px;top:338px;width:19px"></div>
<div class="hsep" style="left:30px;top:388px;width:19px"></div>
<div class="hsep" style="left:56px;top:112px;width:19px"></div>
<div class="hsep" style="left:56px;top:250px;width:19px"></div>
<div class="hsep" style="left:56px;top:344px;width:19px"></div>
<div class="hsep" style="left:749px;top:156px;width:19px"></div>
<div class="hsep" style="left:749px;top:228px;width:19px"></div>
<div class="hsep" style="left:749px;top:300px;width:19px"></div>
<div class="hsep" style="left:749px;top:372px;width:19px"></div>
<div class="hsep" style="left:749px;top:466px;width:19px"></div>
<svg class="ic" style="left:5px;top:91px" width="16" height="16" viewBox="0 0 16 16"><path d="M1 5l5-3.500h9.500l-4 3.500z" fill="#dbe8f6"/><path d="M1 5h10.500v9.500H1z" fill="url(#gb)"/><path d="M11.500 5l4-3.500v9.500l-4 3.500z" fill="#5f8fc4"/><path d="M1 5h10.500v9.500H1zM1 5l5-3.500h9.500v9.500l-4 3.500M11.500 5l4-3.500" fill="none" stroke="#4f7fb4" stroke-width=".8"/></svg>
<svg class="ic" style="left:5px;top:113px" width="16" height="16" viewBox="0 0 16 16"><circle cx="8" cy="8" r="7.500" fill="url(#gsph)"/></svg>
<svg class="ic" style="left:5px;top:135px" width="16" height="16" viewBox="0 0 16 16"><path d="M1.500 3.500v9.500a6.500 2.500 0 0 0 13 0V3.500z" fill="url(#gcyl)" stroke="#5f8fc4" stroke-width=".6"/><ellipse cx="8" cy="3.500" rx="6.500" ry="2.500" fill="#dbe8f6" stroke="#5f8fc4" stroke-width=".7"/></svg>
<svg class="ic" style="left:5px;top:157px" width="16" height="16" viewBox="0 0 16 16"><path d="M8 .5L1.500 12.500a6.500 2.500 0 0 0 13 0z" fill="url(#gcyl)" stroke="#7f9fc4" stroke-width=".5"/><path d="M2 13a6 2 0 0 0 12 0" fill="none" stroke="#4f7fb8" stroke-width="1"/></svg>
<svg class="ic" style="left:5px;top:179px" width="16" height="16" viewBox="0 0 16 16"><path d="M1 4.500l3-3L15.500 11l-3.500 3.500z" fill="#c9dbef"/><path d="M1 4.500L12 14.500H1z" fill="#5f8fc4"/><path d="M1 4.500l3-3L15.500 11l-3.500 3.500H1z" fill="none" stroke="#6f93bf" stroke-width=".7"/></svg>
<svg class="ic" style="left:5px;top:201px" width="16" height="16" viewBox="0 0 16 16"><ellipse cx="8" cy="8" rx="7.500" ry="6" fill="url(#gsph2)" opacity=".85"/><ellipse cx="8.500" cy="7" rx="2.800" ry="2" fill="#f1f1f6"/><path d="M3 5c3-3 8-2 10 0" stroke="#dbe8f6" stroke-width="1.500" fill="none"/></svg>
<svg class="ic" style="left:5px;top:229px" width="16" height="16" viewBox="0 0 16 16"><path d="M1 6.5h8v9h-8z" fill="url(#gw)"/><path d="M1 6.5l2.5 -2.5h8l-2.5 2.5z" fill="#9cc6ee"/><path d="M9 6.5l2.5 -2.5v9l-2.5 2.5z" fill="#6fa4dc"/><path d="M1 6.5h8v9h-8zM1 6.5l2.5 -2.5h8v9l-2.5 2.5M9 6.5l2.5 -2.5" fill="none" stroke="#000" stroke-width="1.2" stroke-linejoin="round"/><path d="M14 15V5" stroke="#1f3f74" stroke-width="1.600"/><path d="M14 .5l2 5h-4z" fill="#1f3f74"/></svg>
<svg class="ic" style="left:5px;top:251px" width="16" height="16" viewBox="0 0 16 16"><path d="M2 6h11v6l-5 3.500-6-3z" fill="#3f8fe6"/><path d="M8 9l5-2v5l-5 3.500z" fill="#1f5fd0"/><ellipse cx="7" cy="8.500" rx="2.500" ry="1.700" fill="#6f8fb4"/><path d="M1 5.500C3 1 12 .5 15 4.500" fill="none" stroke="#2c64a6" stroke-width="2"/><path d="M0 3l4-.5-1 4z" fill="#2c64a6"/></svg>
<svg class="ic" style="left:5px;top:279px" width="16" height="16" viewBox="0 0 16 16"><path d="M1 12l4-3h9l-4 3z" fill="#9fc0e6"/><path d="M1 12h9v3.500H1z" fill="#5f8fc4"/><path d="M10 12l4-3v3.500l-4 3z" fill="#3f6fa8"/><path d="M2 1l5 5" stroke="#b9452a" stroke-width="2.200"/><path d="M6 5l9 8-1.500.5-9-7z" fill="#dfe4ea" stroke="#7f8fa4" stroke-width=".6"/></svg>
<svg class="ic" style="left:5px;top:301px" width="16" height="16" viewBox="0 0 16 16"><path d="M5 1.500a3 1.200 0 0 1 6 0V6H5z" fill="#5f9fe0"/><ellipse cx="8" cy="1.800" rx="3" ry="1.200" fill="#9fc6ee"/><path d="M0.500 8l5-2.500h10L11 9z" fill="#1f6fe0" stroke="#2c64a6" stroke-width=".6"/><path d="M5 9.500v4.500a3 1.200 0 0 0 6 0V9.500z" fill="#4f8fd6"/></svg>
<svg class="ic" style="left:5px;top:323px" width="16" height="16" viewBox="0 0 16 16"><path d="M1 5l7-3.500 7 3.500v7l-7 3.500-7-3.500z" fill="#4f9fe8"/><path d="M1 5l7 3.500 7-3.500-7-3.500z" fill="#9fd0f6"/><path d="M8 8.500V16" stroke="#dbe8f6" stroke-width=".8"/><path d="M5.500 6.500v6M10.500 6.500v6M5.500 6.500c0-3 5-3 5 0" stroke="#1f3fd0" stroke-width="1.200" fill="none"/></svg>
<svg class="ic" style="left:5px;top:352px" width="16" height="16" viewBox="0 0 16 16"><rect x="0.800" y="2.800" width="14.500" height="11.500" fill="#eef3fa" stroke="#3f6fb0" stroke-width="1.100"/><path d="M3 7l4-2 4 2v5l-4 2-4-2z" fill="#5fc6e6"/><path d="M7 9v5l4-2V7z" fill="#3f6f9f"/><path d="M14.500 1l-6 8" stroke="#e9b21f" stroke-width="2.400"/><path d="M15 .3l-1.200 1.600" stroke="#e98a8a" stroke-width="2.400"/><path d="M8.500 9l-1 2 2-1z" fill="#333"/></svg>
<svg class="ic" style="left:5px;top:373px" width="16" height="16" viewBox="0 0 16 16"><rect x="0.800" y="1.800" width="14.500" height="11.500" fill="#dbe6f4" stroke="#3f6fb0" stroke-width="1.100"/><g fill="#fff" stroke="#3f6fb0" stroke-width=".5"><rect x="2" y="3.500" width="2.500" height="2"/><rect x="2" y="7" width="2.500" height="2"/><rect x="2" y="10.500" width="2.500" height="2"/></g><path d="M5.500 7l4-2 4.500 2v6l-4.500 2.500-4-2.500z" fill="#5fb6e0"/><path d="M9.500 9.500v6L14 13V7z" fill="#3f6f9f"/></svg>
<svg class="ic" style="left:5px;top:395px" width="16" height="16" viewBox="0 0 16 16"><rect x="0.800" y="1.800" width="14.500" height="11.500" fill="#eef3fa" stroke="#3f6fb0" stroke-width="1.100"/><path d="M3.500 6l4-2 4 2v5.500l-4 2-4-2z" fill="#5fc6e6"/><path d="M7.500 8v5.500l4-2V6z" fill="#3f5f8f"/><path d="M11.500 6.500v6" stroke="#223" stroke-width="1.500"/></svg>
<svg class="ic" style="left:31px;top:91.5px" width="16" height="16" viewBox="0 0 16 16"><ellipse cx="5.700" cy="8" rx="5" ry="5.500" fill="#a9cdee"/><ellipse cx="10.300" cy="8" rx="5" ry="5.500" fill="#a9cdee"/><path d="M8 3.200a5 5.500 0 0 1 0 9.600a5 5.500 0 0 1 0-9.600z" fill="#a9cdee"/><ellipse cx="5.700" cy="8" rx="5" ry="5.500" fill="none" stroke="#1f4f8f" stroke-width="1.100"/><ellipse cx="10.300" cy="8" rx="5" ry="5.500" fill="none" stroke="#1f4f8f" stroke-width="1.100"/></svg>
<svg class="ic" style="left:31px;top:113.5px" width="16" height="16" viewBox="0 0 16 16"><ellipse cx="5.700" cy="8" rx="5" ry="5.500" fill="#a9cdee"/><ellipse cx="10.300" cy="8" rx="5" ry="5.500" fill="#f1f1f6"/><path d="M8 3.200a5 5.500 0 0 1 0 9.600a5 5.500 0 0 1 0-9.600z" fill="#f1f1f6"/><ellipse cx="5.700" cy="8" rx="5" ry="5.500" fill="none" stroke="#1f4f8f" stroke-width="1.100"/><ellipse cx="10.300" cy="8" rx="5" ry="5.500" fill="none" stroke="#1f4f8f" stroke-width="1.100"/></svg>
<svg class="ic" style="left:31px;top:135.5px" width="16" height="16" viewBox="0 0 16 16"><ellipse cx="5.700" cy="8" rx="5" ry="5.500" fill="#f1f1f6"/><ellipse cx="10.300" cy="8" rx="5" ry="5.500" fill="#f1f1f6"/><path d="M8 3.200a5 5.500 0 0 1 0 9.600a5 5.500 0 0 1 0-9.600z" fill="#a9cdee"/><ellipse cx="5.700" cy="8" rx="5" ry="5.500" fill="none" stroke="#1f4f8f" stroke-width="1.100"/><ellipse cx="10.300" cy="8" rx="5" ry="5.500" fill="none" stroke="#1f4f8f" stroke-width="1.100"/></svg>
<svg class="ic" style="left:31px;top:163px" width="16" height="16" viewBox="0 0 16 16"><path d="M1 6.5h8v9h-8z" fill="url(#gw)"/><path d="M1 6.5l2.5 -2.5h8l-2.5 2.5z" fill="#9cc6ee"/><path d="M9 6.5l2.5 -2.5v9l-2.5 2.5z" fill="#6fa4dc"/><path d="M1 6.5h8v9h-8zM1 6.5l2.5 -2.5h8v9l-2.5 2.5M9 6.5l2.5 -2.5" fill="none" stroke="#000" stroke-width="1.2" stroke-linejoin="round"/><path d="M14 15V5" stroke="#1f3f74" stroke-width="1.600"/><path d="M14 .5l2 5h-4z" fill="#1f3f74"/></svg>
<svg class="ic" style="left:31px;top:185px" width="16" height="16" viewBox="0 0 16 16"><path d="M1 11h5v5h-5z" fill="#6fa4dc"/><path d="M1 11l2 -2h5l-2 2z" fill="#9cc6ee"/><path d="M6 11l2 -2v5l-2 2z" fill="#6fa4dc"/><path d="M1 11h5v5h-5zM1 11l2 -2h5v5l-2 2M6 11l2 -2" fill="none" stroke="#000" stroke-width="1.1" stroke-linejoin="round"/><path d="M11.500 0v9M7 4.500h9" stroke="#1f3f74" stroke-width="1.100"/><path d="M11.500 -.5l1.600 2h-3.200zM11.500 9.500l1.600-2h-3.200zM6.500 4.500l2-1.600v3.200zM16.500 4.500l-2-1.600v3.200z" fill="#1f3f74"/></svg>
<svg class="ic" style="left:31px;top:207px" width="16" height="16" viewBox="0 0 16 16"><path d="M3 3.5h9v9h-9z" fill="#fff"/><path d="M3 3.5l3 -2.5h9l-3 2.5z" fill="#9cc6ee"/><path d="M12 3.5l3 -2.5v9l-3 2.5z" fill="#6fa4dc"/><path d="M3 3.5h9v9h-9zM3 3.5l3 -2.5h9v9l-3 2.5M12 3.5l3 -2.5" fill="none" stroke="#000" stroke-width="1.2" stroke-linejoin="round"/><rect x="1" y="4.500" width="11.500" height="10.500" fill="none" stroke="#1f3f8f" stroke-width="1"/><rect x="4.500" y="6" width="6" height="6" fill="url(#gw)" stroke="#000" stroke-width=".8"/></svg>
<svg class="ic" style="left:31px;top:229px" width="16" height="16" viewBox="0 0 16 16"><path d="M1 4h10v10.5h-10z" fill="#dbe8f6"/><path d="M1 4l4 -3h10l-4 3z" fill="#fff"/><path d="M11 4l4 -3v10.5l-4 3z" fill="#eef3fa"/><path d="M1 4h10v10.5h-10zM1 4l4 -3h10v10.5l-4 3M11 4l4 -3" fill="none" stroke="#000" stroke-width="1.3" stroke-linejoin="round"/><path d="M2.500 6l7 7.500M9.500 6l-7 7.500" stroke="#e62a1f" stroke-width="1.800"/></svg>
<svg class="ic" style="left:31px;top:251px" width="16" height="16" viewBox="0 0 16 16"><path d="M2 9a6.500 6.500 0 0 1 3-6.500M11 2a6.500 6.500 0 0 1 3 9" fill="none" stroke="#2c5f9f" stroke-width="1.600"/><path d="M3.500 0l3 2.500-4 1.500z" fill="#2c5f9f"/><path d="M3 8.5h7v7h-7z" fill="url(#gw)"/><path d="M3 8.5l2.5 -2.5h7l-2.5 2.5z" fill="#9cc6ee"/><path d="M10 8.5l2.5 -2.5v7l-2.5 2.5z" fill="#6fa4dc"/><path d="M3 8.5h7v7h-7zM3 8.5l2.5 -2.5h7v7l-2.5 2.5M10 8.5l2.5 -2.5" fill="none" stroke="#000" stroke-width="1.2" stroke-linejoin="round"/></svg>
<svg class="ic" style="left:31px;top:273px" width="16" height="16" viewBox="0 0 16 16"><path d="M1.500 14.500L3 5.500l4-3 5.500 8.500-3 3.500z" fill="url(#gw)"/><path d="M7 2.500l5.500 8.500-3 3.500L5.500 6z" fill="#6fa4dc"/><path d="M1.500 14.500L3 5.500l4-3 5.500 8.500-3 3.500zM5.500 6l4 8.500M3 5.500l2.500.5 1.500-3.500" fill="none" stroke="#000" stroke-width="1.200" stroke-linejoin="round"/><path d="M15.500 7l-3-5" stroke="#1f3f74" stroke-width="1.400"/><path d="M11.500 0l3.500 2-3 1.500z" fill="#1f3f74"/></svg>
<svg class="ic" style="left:31px;top:295px" width="16" height="16" viewBox="0 0 16 16"><path d="M8 4h5v6h-5z" fill="#6fa4dc"/><path d="M8 4l2.5 -2h5l-2.5 2z" fill="#fff"/><path d="M13 4l2.5 -2v6l-2.5 2z" fill="#fff"/><path d="M8 4h5v6h-5zM8 4l2.5 -2h5v6l-2.5 2M13 4l2.5 -2" fill="none" stroke="#000" stroke-width="1.2" stroke-linejoin="round"/><rect x="1.500" y="7.500" width="6.500" height="7.500" fill="#5f9ad6" stroke="#000" stroke-width="1.300"/><path d="M7 1.500C4 0 2 2 2.500 4" fill="none" stroke="#1f3f74" stroke-width="1.400"/><path d="M.5 3l4 .5-2.500 3z" fill="#1f3f74"/></svg>
<svg class="ic" style="left:31px;top:317px" width="16" height="16" viewBox="0 0 16 16"><rect x="0.500" y="1.500" width="3" height="3" fill="#2f9fe6" stroke="#000" stroke-width=".9"/><rect x="0.500" y="6.500" width="3" height="3" fill="#3fe6a0" stroke="#000" stroke-width=".9"/><rect x="0.500" y="11.500" width="3" height="3" fill="#f0503a" stroke="#000" stroke-width=".9"/><path d="M6 4.5h6.5v7h-6.5z" fill="#2f9f5f"/><path d="M6 4.5l3 -2.5h6.5l-3 2.5z" fill="#fff"/><path d="M12.5 4.5l3 -2.5v7l-3 2.5z" fill="#fff"/><path d="M6 4.5h6.5v7h-6.5zM6 4.5l3 -2.5h6.5v7l-3 2.5M12.5 4.5l3 -2.5" fill="none" stroke="#000" stroke-width="1.2" stroke-linejoin="round"/></svg>
<svg class="ic" style="left:31px;top:345px" width="16" height="16" viewBox="0 0 16 16"><path d="M7.500 0C4 -.5 1.500 1 1.500 3" fill="none" stroke="#2c5f9f" stroke-width="1.300"/><path d="M0 2l3.500 0-1.500 3z" fill="#1f3f74"/><path d="M1.500 6.500v9" stroke="#000" stroke-width="1.400"/><path d="M5 5.5h7.5v9.5h-7.5z" fill="#6fa4dc"/><path d="M5 5.5l3 -2.5h7.5l-3 2.5z" fill="#9cc6ee"/><path d="M12.5 5.5l3 -2.5v9.5l-3 2.5z" fill="#6fa4dc"/><path d="M5 5.5h7.5v9.5h-7.5zM5 5.5l3 -2.5h7.5v9.5l-3 2.5M12.5 5.5l3 -2.5" fill="none" stroke="#000" stroke-width="1.3" stroke-linejoin="round"/></svg>
<svg class="ic" style="left:31px;top:367px" width="16" height="16" viewBox="0 0 16 16"><rect x="0.500" y="1.500" width="3" height="3" fill="#2f9fe6" stroke="#000" stroke-width=".9"/><rect x="0.500" y="6.500" width="3" height="3" fill="#3fe6a0" stroke="#000" stroke-width=".9"/><rect x="0.500" y="11.500" width="3" height="3" fill="#f0503a" stroke="#000" stroke-width=".9"/><path d="M6 4.5h6.5v7.5h-6.5z" fill="url(#gw)"/><path d="M6 4.5l3 -2.5h6.5l-3 2.5z" fill="#fff"/><path d="M12.5 4.5l3 -2.5v7.5l-3 2.5z" fill="#fff"/><path d="M6 4.5h6.5v7.5h-6.5zM6 4.5l3 -2.5h6.5v7.5l-3 2.5M12.5 4.5l3 -2.5" fill="none" stroke="#000" stroke-width="1.2" stroke-linejoin="round"/><path d="M12.500 4.500v7.500" stroke="#e6201f" stroke-width="1.500"/></svg>
<svg class="ic" style="left:31px;top:395px" width="16" height="16" viewBox="0 0 16 16"><path d="M1 4.5h10v10.5h-10z" fill="#7fb6e8"/><path d="M1 4.5l4 -3.5h10l-4 3.5z" fill="#9cc6ee"/><path d="M11 4.5l4 -3.5v10.5l-4 3.5z" fill="#5f94cc"/><path d="M1 4.5h10v10.5h-10zM1 4.5l4 -3.5h10v10.5l-4 3.5M11 4.5l4 -3.5" fill="none" stroke="#000" stroke-width="1.4" stroke-linejoin="round"/><circle cx="7" cy="11" r="1.800" fill="none" stroke="#1f3f8f" stroke-width="1.200"/><path d="M3 11a4 4 0 0 1 4-4" fill="none" stroke="#1f3f8f" stroke-width="1.200"/></svg>
<svg class="ic" style="left:31px;top:418px" width="16" height="16" viewBox="0 0 16 16"><path d="M1 6l4-3h9v8l-4 3.500H1z" fill="#9fc0e6"/><path d="M1 6h9v8.500H1z" fill="url(#gb)"/><path d="M10 0v6" stroke="#c9831f" stroke-width="1.600"/><path d="M8 6h4.500l2.500 9H6z" fill="#e9b21f" stroke="#a9721a" stroke-width=".7"/><path d="M8 8h5" stroke="#e62a1f" stroke-width="1.200"/><path d="M8.500 11v4M10.500 11v4M12.500 11v4" stroke="#a9721a" stroke-width=".8"/></svg>
<svg class="ic" style="left:31px;top:439px" width="16" height="16" viewBox="0 0 16 16"><path d="M1 4.500l3-1.500v10l-3 1.500z" fill="#9cc6ee"/><path d="M4 3h2.500v10H4z" fill="#5f94cc"/><path d="M1 4.500l3-1.500h2.500v10l-3 1.500H1z" fill="none" stroke="#000" stroke-width="1.100"/><path d="M10 4.500l3-1.500v10l-3 1.500z" fill="#9cc6ee"/><path d="M13 3h2.500v10H13z" fill="#5f94cc"/><path d="M10 4.500l3-1.500h2.500v10l-3 1.500H10z" fill="none" stroke="#000" stroke-width="1.100"/><path d="M8.200 0v16" stroke="#000" stroke-width="1.100" stroke-dasharray="3 1.500 1 1.500"/></svg>
<svg class="ic" style="left:31px;top:461px" width="16" height="16" viewBox="0 0 16 16"><path d="M1 4.5h10.5v11h-10.5z" fill="#9cc6ee"/><path d="M1 4.5l4 -3.5h10.5l-4 3.5z" fill="#bcd9f4"/><path d="M11.5 4.5l4 -3.5v11l-4 3.5z" fill="#6fa4dc"/><path d="M1 4.5h10.5v11h-10.5zM1 4.5l4 -3.5h10.5v11l-4 3.5M11.5 4.5l4 -3.5" fill="none" stroke="#000" stroke-width="1.4" stroke-linejoin="round"/><rect x="3" y="6.500" width="6.500" height="7" fill="#7fb0e0" stroke="#1f3f74" stroke-width="1"/><rect x="6" y="7.500" width="3" height="3.500" fill="#fff"/></svg>
<svg class="ic" style="left:31px;top:482px" width="16" height="16" viewBox="0 0 16 16"><path d="M5 3.5h7v8h-7z" fill="#bcd9f4"/><path d="M5 3.5l3 -2.5h7l-3 2.5z" fill="#dbe8f6"/><path d="M12 3.5l3 -2.5v8l-3 2.5z" fill="#8fb9e4"/><path d="M5 3.5h7v8h-7zM5 3.5l3 -2.5h7v8l-3 2.5M12 3.5l3 -2.5" fill="none" stroke="#000" stroke-width="1.2" stroke-linejoin="round"/><path d="M1 10.500l3 3.500 6-7" fill="none" stroke="#1f7f2f" stroke-width="2"/></svg>
<svg class="ic" style="left:57px;top:91px" width="16" height="16" viewBox="0 0 16 16"><path d="M1 .5h9.500l3 3v9H1z" fill="#fff" stroke="#2c64a6" stroke-width="1"/><circle cx="7" cy="5" r="2.800" fill="#dbe8f6" stroke="#7f9fbf" stroke-width="1"/><path d="M5 7L.5 12.500" stroke="#b9581f" stroke-width="1.400"/><rect x="6" y="7" width="9.500" height="8.500" fill="#eef3fa" stroke="#1f4f96" stroke-width="1.100"/><rect x="6" y="7" width="9.500" height="2" fill="#1f4f96"/><path d="M8 11.500h5.500M8 13.500h5.500" stroke="#5f8fc4" stroke-width=".9"/></svg>
<svg class="ic" style="left:57px;top:119px" width="16" height="16" viewBox="0 0 16 16"><path d="M1 5l4-4h10v10l-4 4H1z" fill="url(#gb)" opacity=".75"/><path d="M1 5l4-4h10l-4 4z" fill="#2c5f9f"/><path d="M1 5h10v10H1zM1 5l4-4h10v10l-4 4M11 5l4-4" fill="none" stroke="#2c5f9f" stroke-width="1"/><path d="M5 1v10h10M5 11l-4 4" fill="none" stroke="#7fa6d4" stroke-width=".8"/></svg>
<svg class="ic" style="left:57px;top:141px" width="16" height="16" viewBox="0 0 16 16"><path d="M1 5l4-4h10v10l-4 4H1z" fill="url(#gb)" opacity=".75"/><path d="M1 15l4-4h10l-4 4z" fill="#2c5f9f"/><path d="M1 5h10v10H1zM1 5l4-4h10v10l-4 4M11 5l4-4" fill="none" stroke="#2c5f9f" stroke-width="1"/><path d="M5 1v10h10M5 11l-4 4" fill="none" stroke="#7fa6d4" stroke-width=".8"/></svg>
<svg class="ic" style="left:57px;top:163px" width="16" height="16" viewBox="0 0 16 16"><path d="M1 5l4-4h10v10l-4 4H1z" fill="url(#gb)" opacity=".75"/><path d="M1 5l4-4v10l-4 4z" fill="#2c5f9f"/><path d="M1 5h10v10H1zM1 5l4-4h10v10l-4 4M11 5l4-4" fill="none" stroke="#2c5f9f" stroke-width="1"/><path d="M5 1v10h10M5 11l-4 4" fill="none" stroke="#7fa6d4" stroke-width=".8"/></svg>
<svg class="ic" style="left:57px;top:185px" width="16" height="16" viewBox="0 0 16 16"><path d="M1 5l4-4h10v10l-4 4H1z" fill="url(#gb)" opacity=".75"/><path d="M11 5l4-4v10l-4 4z" fill="#2c5f9f"/><path d="M1 5h10v10H1zM1 5l4-4h10v10l-4 4M11 5l4-4" fill="none" stroke="#2c5f9f" stroke-width="1"/><path d="M5 1v10h10M5 11l-4 4" fill="none" stroke="#7fa6d4" stroke-width=".8"/></svg>
<svg class="ic" style="left:57px;top:207px" width="16" height="16" viewBox="0 0 16 16"><path d="M1 5l4-4h10v10l-4 4H1z" fill="url(#gb)" opacity=".75"/><path d="M1 5h10v10H1z" fill="#2c5f9f"/><path d="M1 5h10v10H1zM1 5l4-4h10v10l-4 4M11 5l4-4" fill="none" stroke="#2c5f9f" stroke-width="1"/><path d="M5 1v10h10M5 11l-4 4" fill="none" stroke="#7fa6d4" stroke-width=".8"/></svg>
<svg class="ic" style="left:57px;top:229px" width="16" height="16" viewBox="0 0 16 16"><path d="M1 5l4-4h10v10l-4 4H1z" fill="url(#gb)" opacity=".75"/><path d="M5 1h10v10H5z" fill="#2c5f9f"/><path d="M1 5h10v10H1zM1 5l4-4h10v10l-4 4M11 5l4-4" fill="none" stroke="#2c5f9f" stroke-width="1"/><path d="M5 1v10h10M5 11l-4 4" fill="none" stroke="#7fa6d4" stroke-width=".8"/></svg>
<svg class="ic" style="left:57px;top:257px" width="16" height="16" viewBox="0 0 16 16"><path d="M8 .5L14.500 4.500V11.500L8 15.500L1.500 11.500V4.500z" fill="#f4f7fc"/><path d="M14.500 4.500L8 8.500V15.500L14.500 11.500z" fill="#c4d8ee"/><path d="M1.500 4.500L8 8.500V15.500L1.500 11.500z" fill="#2c5f9f"/><path d="M8 .5V8.500" stroke="#a9c4e4" stroke-width=".9"/><path d="M8 .5L14.500 4.500V11.500L8 15.500L1.500 11.500V4.500zM1.500 4.500L8 8.500l6.500-4M8 8.500v7" fill="none" stroke="#2c5f9f" stroke-width="1"/></svg>
<svg class="ic" style="left:57px;top:279px" width="16" height="16" viewBox="0 0 16 16"><path d="M8 .5L14.500 4.500V11.500L8 15.500L1.500 11.500V4.500z" fill="#f4f7fc"/><path d="M1.500 4.500L8 8.500V15.500L1.500 11.500z" fill="#c4d8ee"/><path d="M14.500 4.500L8 8.500V15.500L14.500 11.500z" fill="#2c5f9f"/><path d="M8 .5V8.500" stroke="#a9c4e4" stroke-width=".9"/><path d="M8 .5L14.500 4.500V11.500L8 15.500L1.500 11.500V4.500zM1.500 4.500L8 8.500l6.500-4M8 8.500v7" fill="none" stroke="#2c5f9f" stroke-width="1"/></svg>
<svg class="ic" style="left:57px;top:301px" width="16" height="16" viewBox="0 0 16 16"><path d="M8 .5L14.500 4.500V11.500L8 15.500L1.500 11.500V4.500z" fill="#f4f7fc"/><path d="M1.500 11.500L8 7.500l6.500 4L8 15.500z" fill="#c4d8ee"/><path d="M14.500 4.500L8 .5V7.500L14.500 11.500z" fill="#2c5f9f"/><path d="M8 .5L14.500 4.500V11.500L8 15.500L1.500 11.500V4.500zM8 .5V7.500M1.500 11.500L8 7.500l6.500 4" fill="none" stroke="#2c5f9f" stroke-width="1"/></svg>
<svg class="ic" style="left:57px;top:323px" width="16" height="16" viewBox="0 0 16 16"><path d="M8 .5L14.500 4.500V11.500L8 15.500L1.500 11.500V4.500z" fill="#f4f7fc"/><path d="M1.500 11.500L8 7.500l6.500 4L8 15.500z" fill="#c4d8ee"/><path d="M1.500 4.500L8 .5V7.500L1.500 11.500z" fill="#2c5f9f"/><path d="M8 .5L14.500 4.500V11.500L8 15.500L1.500 11.500V4.500zM8 .5V7.500M1.500 11.500L8 7.500l6.500 4" fill="none" stroke="#2c5f9f" stroke-width="1"/></svg>
<svg class="ic" style="left:57px;top:352px" width="16" height="16" viewBox="0 0 16 16"><path d="M1 6l3-2h4l1.500-2h4l1.500 2v7l-3 3.500H1z" fill="#4c5566"/><path d="M1 6h3.500v8.500H1z" fill="#2c3444"/><path d="M4 4l2-1.500h3L8 4z" fill="#d4dae4"/><circle cx="10.500" cy="8.500" r="4" fill="#7f8fa4" stroke="#111" stroke-width="1.200"/><circle cx="10.500" cy="8.500" r="2" fill="#2c3f6f" stroke="#d4dae4" stroke-width=".6"/><circle cx="13.500" cy="6" r="1.500" fill="#d4dae4" stroke="#111" stroke-width=".7"/></svg>
<svg class="ic" style="left:57px;top:391px" width="16" height="16" viewBox="0 0 16 16"><rect x="1" y="1" width="13" height="9" fill="#fff" stroke="#000" stroke-width="1.300"/><path d="M9.500 3.500L4.500 15h10z" fill="#fff" stroke="#000" stroke-width="1.300" stroke-linejoin="round"/><path d="M6 11.500h7" stroke="#000" stroke-width="1.200"/></svg>
<svg class="ic" style="left:57px;top:413px" width="16" height="16" viewBox="0 0 16 16"><path d="M1 3.500h6v6H1zM1 3.500l2-2h6v6l-2 2M7 3.500l2-2" fill="none" stroke="#000" stroke-width="1.200"/><path d="M3 1.500v6h6M3 7.500l-2 2" fill="none" stroke="#000" stroke-width=".6"/><path d="M11.500 5.500L8 14h7z" fill="none" stroke="#000" stroke-width="1.200" stroke-linejoin="round"/><ellipse cx="11.500" cy="14" rx="3.500" ry="1.300" fill="#fff" stroke="#000" stroke-width="1"/></svg>
<svg class="ic" style="left:57px;top:435px" width="16" height="16" viewBox="0 0 16 16"><path d="M8 .5l7 3.500v8L8 15.500 1 12V4z" fill="#fff" stroke="#000" stroke-width="1.300" stroke-linejoin="round"/><path d="M1 4l7 3.500L15 4M8 7.500v8" fill="none" stroke="#000" stroke-width="1.100"/></svg>
<svg class="ic" style="left:57px;top:457px" width="16" height="16" viewBox="0 0 16 16"><path d="M8 1l7 3-7 3.500L1 4z" fill="#7fb9ea"/><path d="M1 4l7 3.500V15L1 11.500z" fill="#5f9fdc"/><path d="M15 4L8 7.500V15l7-3.500z" fill="#3f7fc0"/></svg>
<svg class="ic" style="left:57px;top:478px" width="16" height="16" viewBox="0 0 16 16"><ellipse cx="11" cy="13.500" rx="5" ry="1.800" fill="#9c9ca8" opacity=".6"/><circle cx="7.500" cy="7.500" r="7" fill="url(#gsph2)"/></svg>
<svg class="ic" style="left:57px;top:501px" width="16" height="16" viewBox="0 0 16 16"><path d="M8 1l7 3-7 3.500L1 4z" fill="#9cd0f4"/><path d="M1 4l7 3.500V15.500L1 12z" fill="#6fb0e6"/><path d="M15 4L8 7.500V15.500l7-3.500z" fill="#4f8fd0"/><path d="M8 1l7 3v8l-7 3.500L1 12V4zM1 4l7 3.500L15 4M8 7.500v8" fill="none" stroke="#111" stroke-width="1.100" stroke-linejoin="round"/></svg>
<svg class="ic" style="left:750px;top:91.5px" width="16" height="16" viewBox="0 0 16 16"><path d="M1 .5v14.500M15 .5v14.500M1 4.500h14" stroke="#000" fill="none" stroke-width="1.300"/><path d="M1.500 4.500l3.500-1.800v3.600zM14.500 4.500l-3.500-1.800v3.600z" fill="#000"/></svg>
<svg class="ic" style="left:750px;top:113px" width="16" height="16" viewBox="0 0 16 16"><path d="M1 5l5-4M10 15l5-4M3.500 3l9 10" stroke="#000" fill="none" stroke-width="1.400"/><path d="M3.500 3l3.800 1.500-2.300 2zM12.500 13l-3.800-1.500 2.300-2z" fill="#000"/></svg>
<svg class="ic" style="left:750px;top:135px" width="16" height="16" viewBox="0 0 16 16"><path d="M4.500 5v9h11M4.500 5l4 4 3-1.500h4M10 8.500v5.500M14.500 1.500v6" stroke="#000" fill="none" stroke-width="1.300"/><text x="2.500" y="3.500" font-size="5.500" font-weight="bold" fill="#1f4f9f" font-family="Liberation Sans,sans-serif">0</text><text x="11.500" y="3.500" font-size="5.500" font-weight="bold" fill="#1f4f9f" font-family="Liberation Sans,sans-serif">X</text><text x="-1" y="8.500" font-size="5.500" font-weight="bold" fill="#1f4f9f" font-family="Liberation Sans,sans-serif">Y</text><text x="-1" y="15" font-size="5.500" font-weight="bold" fill="#1f4f9f" font-family="Liberation Sans,sans-serif">0</text></svg>
<svg class="ic" style="left:750px;top:163px" width="16" height="16" viewBox="0 0 16 16"><circle cx="8" cy="8" r="7.200" fill="none" stroke="#6c6c70" stroke-width="1.200"/><path d="M9.500 9.500l-5-5" stroke="#000" stroke-width="1.400"/><path d="M3.500 3.500l4.500 1.200-3.300 3.300z" fill="#000"/></svg>
<svg class="ic" style="left:750px;top:185px" width="16" height="16" viewBox="0 0 16 16"><circle cx="8" cy="8" r="7.200" fill="none" stroke="#6c6c70" stroke-width="1.200"/><path d="M4 4l8 8" stroke="#000" stroke-width="1.400"/><path d="M3 3l4.200 1-3.200 3.200zM13 13l-4.200-1 3.200-3.200z" fill="#000"/></svg>
<svg class="ic" style="left:750px;top:207px" width="16" height="16" viewBox="0 0 16 16"><path d="M1 15.500h14M1 10.500L10 .5" stroke="#000" fill="none" stroke-width="1.400"/><path d="M8.500 3.500c3 2 5 6 5 10" stroke="#000" fill="none" stroke-width="1"/><path d="M8 2.500l3.500 1.200-2.300 2.300zM13.500 14.500l-1.800-3.500h3.300z" fill="#000"/></svg>
<svg class="ic" style="left:750px;top:235px" width="16" height="16" viewBox="0 0 16 16"><path d="M1 1v14M15 1v14M1 4.500h14" stroke="#000" fill="none" stroke-width="1.300"/><path d="M1.500 4.500l3-1.600v3.200zM14.500 4.500l-3-1.600v3.200z" fill="#000"/><path d="M4.500 .5l6 2.500-2 1.500 4.500 2.500-1.500 1 2.500 7.500-8-7.500 2-1.200-5-3 2.500-1.300z" fill="#f3e21f" stroke="#7f6f1f" stroke-width=".8"/></svg>
<svg class="ic" style="left:750px;top:257px" width="16" height="16" viewBox="0 0 16 16"><path d="M1.500 .5v15M11 7v8M1.500 4.500h13M1.500 11.500h9.500" stroke="#000" fill="none" stroke-width="1.200"/><path d="M2 4.500l3-1.500v3zM15.500 4.500l-3-1.500v3zM2 11.500l3-1.500v3zM10.500 11.500l-3-1.500v3z" fill="#000"/></svg>
<svg class="ic" style="left:750px;top:279px" width="16" height="16" viewBox="0 0 16 16"><path d="M1.500 .5v15M8.500 .5v15M15.500 .5v15M1.500 5h14" stroke="#000" fill="none" stroke-width="1.200"/><path d="M2 5l2.500-1.400v2.800zM8 5l-2.500-1.400v2.800zM9 5l2.500-1.400v2.800zM15 5l-2.500-1.400v2.800z" fill="#000"/></svg>
<svg class="ic" style="left:750px;top:308px" width="16" height="16" viewBox="0 0 16 16"><path d="M1 6l6-3.500h5" fill="none" stroke="#000" stroke-width="1.200"/><path d="M0 7l3.500-3 1 2.500z" fill="#000"/><path d="M5.500 2l5 1.500-2 1.500 3.500 2.500-1.500 1 3 7-7.500-7 2-1.200-4-2.500 2-1z" fill="#e9d21f" stroke="#6f6f1f" stroke-width=".8"/><text x="11" y="6" font-size="7.500" font-weight="bold" fill="#1f4f9f" font-family="Liberation Sans,sans-serif">A</text></svg>
<svg class="ic" style="left:750px;top:329px" width="16" height="16" viewBox="0 0 16 16"><rect x="0.800" y="2" width="14.500" height="11" fill="#dbe6f4" stroke="#1f4f96" stroke-width="1.300"/><path d="M8 2v11" stroke="#1f4f96" stroke-width="1.200"/><circle cx="4.500" cy="7.500" r="2" fill="none" stroke="#1f4f96" stroke-width="1"/><path d="M4.500 4v7M1.500 7.500h6" stroke="#1f4f96" stroke-width=".9"/><text x="9" y="11" font-size="8" font-weight="bold" fill="#1f1fbf" font-family="Liberation Sans,sans-serif">.1</text></svg>
<svg class="ic" style="left:750px;top:351px" width="16" height="16" viewBox="0 0 16 16"><circle cx="8" cy="8" r="7.200" fill="none" stroke="#5c5c60" stroke-width="1.200"/><path d="M8 4.500v7M4.500 8h7" stroke="#000" stroke-width="1.700"/></svg>
<svg class="ic" style="left:750px;top:380px" width="16" height="16" viewBox="0 0 16 16"><path d="M4.500 1L1.500 13.500M14.500 1l-3 12.500M3.500 5h10.500" stroke="#000" fill="none" stroke-width="1.200"/><path d="M4 5l2.500-1.400v2.800zM13.500 5l-2.500-1.400v2.800z" fill="#000"/></svg>
<svg class="ic" style="left:750px;top:401.5px" width="16" height="16" viewBox="0 0 16 16"><text x="8" y="9" font-size="11.500" font-weight="bold" fill="#1f4f8f" text-anchor="middle" font-family="Liberation Sans,sans-serif">A</text><path d="M1 9.500v6M15 9.500v6M1 12.500h14" stroke="#000" fill="none" stroke-width="1.300"/><path d="M1.500 12.500l3-1.600v3.200zM14.500 12.500l-3-1.600v3.200z" fill="#000"/></svg>
<svg class="ic" style="left:750px;top:423px" width="16" height="16" viewBox="0 0 16 16"><path d="M13 1.500l-6 9" stroke="#e9a21f" stroke-width="2.600"/><path d="M13.800 .3l-1 1.500" stroke="#e98a8a" stroke-width="2.600"/><path d="M6 9.500l-.5 2.500 2.300-1.300z" fill="#333"/><path d="M1 10v5.500M15 10v5.500M1 12.500h14" stroke="#000" fill="none" stroke-width="1.300"/><path d="M1.500 12.500l3-1.600v3.200zM14.500 12.500l-3-1.600v3.200z" fill="#000"/></svg>
<svg class="ic" style="left:750px;top:445px" width="16" height="16" viewBox="0 0 16 16"><path d="M3 1v8M14.500 1v8M3 3.500h11.500" fill="none" stroke="#2c64a6" stroke-width="1.200"/><path d="M3.500 3.500l3-1.500v3zM14 3.500l-3-1.500v3z" fill="#4f84c0"/><path d="M1.500 6.500v9M12.500 6.500v9M1.500 10h11" stroke="#000" fill="none" stroke-width="1.200"/><path d="M2 10l3-1.600v3.200zM12 10l-3-1.600v3.200z" fill="#000"/></svg>
<svg class="ic" style="left:750px;top:473px" width="16" height="16" viewBox="0 0 16 16"><path d="M15.500 0l-6 9" stroke="#c9832a" stroke-width="2.400"/><path d="M15.800 -.5l-1.500 2.200" stroke="#e9c0a0" stroke-width="2.400"/><path d="M10 7.500l-2.500 3 1.500 1.200 2.500-3z" fill="#444"/><path d="M8 10.500l-5 2.500h6.500z" fill="#112"/><path d="M0.800 10v6M15.500 10v6M1 13h14.500" stroke="#000" stroke-width="1.400" fill="none"/><path d="M1.200 13l3.500-1.800v3.600zM15.200 13l-3.500-1.800v3.600z" fill="#000"/></svg>
<svg class="a" style="left:755px;top:513px" width="6" height="4"><path d="M0 4a3 3 0 0 1 6 0z" fill="#111"/></svg>
<svg class="ic" style="left:777px;top:91.5px" width="16" height="16" viewBox="0 0 16 16"><path d="M1 .5h5.500v6H1zM1 8.500h5.500v6.500H1z" fill="#fff" stroke="#000" stroke-width="1.100"/><path d="M6.500 .5l8.500 6h-8.500zM6.500 8.500l8.500 6.500h-8.500z" fill="#fff" stroke="#b01f1f" stroke-width="1.100"/><path d="M1 7.500h13" stroke="#7c7c80" stroke-width="2"/><path d="M6.500 0v15.500" stroke="#000" stroke-width=".8" stroke-dasharray="1.500 1"/></svg>
<svg class="ic" style="left:777px;top:113px" width="16" height="16" viewBox="0 0 16 16"><path d="M6 1.500l5.500 5.500L6 12.500.5 7z" fill="#fff" stroke="#333" stroke-width="1"/><path d="M1 1h5.500M1 1v6" stroke="#c01f1f" stroke-width="1.300" stroke-dasharray="2 1"/><circle cx="5.500" cy="6" r="1.500" fill="none" stroke="#c01f1f" stroke-width="1"/><rect x="10.500" y="10" width="5" height="5.500" fill="#fff" stroke="#000" stroke-width="1.200"/><path d="M15 8L10.500 3" stroke="#000" stroke-width="1.100"/><path d="M9.500 1.500l3.500 1-2 2z" fill="#000"/></svg>
<svg class="ic" style="left:777px;top:135px" width="16" height="16" viewBox="0 0 16 16"><path d="M4 0l1 11 11-1z" fill="#fff" stroke="#000" stroke-width="1.200" stroke-linejoin="round"/><path d="M0 5h5M11 5h5.500M6.500 10.500v5.500M12.500 .5l-2 3" stroke="#000" stroke-width="1.800"/><circle cx="6.500" cy="4.500" r="1" fill="#a01f1f"/><circle cx="9" cy="8.500" r="1" fill="#a01f1f"/></svg>
<svg class="ic" style="left:777px;top:157px" width="16" height="16" viewBox="0 0 16 16"><path d="M6.500 .5L1.500 14.500M15.500 .5L9.500 14.500" stroke="#000" stroke-width="1.300"/><path d="M0 5.500h6" stroke="#000" stroke-width="2"/><path d="M7.500 5.500h5" stroke="#a01f1f" stroke-width="1.600" stroke-dasharray="1.500 1.500"/></svg>
<svg class="ic" style="left:777px;top:179px" width="16" height="16" viewBox="0 0 16 16"><path d="M6 1.500a3 3 0 1 0 0 5.500h2M6 8.500a3 3 0 1 0 0 6h9.500" fill="none" stroke="#000" stroke-width="1.200"/><path d="M14.500 1L9 12" stroke="#f3f01f" stroke-width="2.600"/><path d="M14.500 1L9 12" stroke="#000" stroke-width=".500" opacity=".5"/><path d="M15 0l-1 2" stroke="#e01fd0" stroke-width="2.400"/><path d="M8 11l-.5 3 2.500-1.800z" fill="#000"/><path d="M3 7h1.500M14 7h1.500M3 14.500h1.500M14 14.500h1.500" stroke="#e01f1f" stroke-width="1.200"/></svg>
<svg class="ic" style="left:777px;top:201px" width="16" height="16" viewBox="0 0 16 16"><text x="8" y="5.500" font-size="6.500" font-weight="bold" fill="#000" text-anchor="middle" font-family="Liberation Sans,sans-serif" letter-spacing="-.3">ABCD</text><path d="M0 8.500h16" stroke="#000" stroke-width="1"/><path d="M5.500 7L13.500 7 10.500 11 2.500 11z" fill="#fff" stroke="#9c7c7c" stroke-width=".9"/></svg>
<svg class="ic" style="left:777px;top:223px" width="16" height="16" viewBox="0 0 16 16"><rect x="0" y="-.5" width="16" height="17" fill="#c9c6b9"/><rect x="2.500" y="3" width="10" height="9.500" fill="#fff" stroke="#e01f1f" stroke-width="1.300"/><path d="M3.500 9l1.500-3 1.500 2 1.500-3 1.500 3 1.500-2 1 3v2h-8.500z" fill="#1f3fe0"/><path d="M3.500 11l2-1 2 1 2-1 2.500 1v1.500h-8.500z" fill="#1f9f3f"/><path d="M2 0v16M13 0v16M0 3h16M0 13h16" stroke="#000" stroke-width="1"/><path d="M15 4L9 15" stroke="#555" stroke-width=".9"/></svg>
<svg class="ic" style="left:777px;top:245px" width="16" height="16" viewBox="0 0 16 16"><path d="M1.500 14.500V1.500h10" fill="none" stroke="#000" stroke-width="1.300"/><path d="M3 2.500h9l3 1v3l-2-1-2 2-2-2.500-2 2-2-2-2 1.500z" fill="#e01f1f"/><path d="M3 7l2-1 2 2 2-1.500 2 2 2-2.500 2.500 2v4l-2.500 1-2-1.500-2 1-2-1.500-2 1-2-1z" fill="#1f3fe0"/><path d="M3 13l2-1.500 2 1 2-1 2 1.500 2-1 2.500 1v2H3z" fill="#1f9f3f"/><path d="M5 6l2 1M9 8l2-1" stroke="#fff" stroke-width=".8"/></svg>
<svg class="ic" style="left:777px;top:267px" width="16" height="16" viewBox="0 0 16 16"><circle cx="6" cy="6" r="5.500" fill="#1fe0e0" stroke="#0f8f9f" stroke-width=".6"/><path d="M2 3c2-2 4-2 5-1l-1 2 2 1-2 2-2-1-1 1z" fill="#1f8f2f"/><path d="M7 8l2 0 0 2-2 1z" fill="#1f8f2f"/><circle cx="11" cy="10" r="3.800" fill="#f4f4f8" stroke="#333" stroke-width="1.200"/><path d="M8 12.500L4.500 16" stroke="#000" stroke-width="1.800"/><path d="M5.500 15L4.500 16" stroke="#1f3fe0" stroke-width="1.800"/></svg>
<svg class="ic" style="left:777px;top:289.5px" width="16" height="16" viewBox="0 0 16 16"><path d="M0 8h5" stroke="#6c6c70" stroke-width="1.400"/><path d="M11 8h5" stroke="#6c6c70" stroke-width="1.400"/><path d="M5 8l1.500 4 3-8.500L11 8" fill="none" stroke="#000" stroke-width="1.300" stroke-linejoin="round"/></svg>
<svg class="ic" style="left:777px;top:311px" width="16" height="16" viewBox="0 0 16 16"><rect x="0" y="-.5" width="16" height="17" fill="#c9c6b9"/><path d="M10 0l-5 6.500h3l-3 7 8-8.500h-3.500l4-5z" fill="#f3f01f" stroke="#000" stroke-width=".8"/><path d="M1.500 1v10.500" stroke="#000" stroke-width="1.200" stroke-dasharray="1.500 1.500"/><path d="M5 14.500h10" stroke="#000" stroke-width="1.200" stroke-dasharray="2 1.500"/><rect x="0.500" y="12" width="3.500" height="3.500" fill="#fff" stroke="#000" stroke-width="1.100"/><path d="M5 11.500l7-6" stroke="#555" stroke-width=".8"/></svg>
<svg class="ic" style="left:777px;top:333px" width="16" height="16" viewBox="0 0 16 16"><circle cx="4" cy="3.500" r="3" fill="none" stroke="#000" stroke-width="1.100"/><path d="M2 8h4" stroke="#000" stroke-width="1.200"/><text x="4" y="15.500" font-size="7.500" font-weight="bold" fill="#000" text-anchor="middle" font-family="Liberation Sans,sans-serif">M</text><circle cx="11.500" cy="11" r="3" fill="none" stroke="#000" stroke-width="1.100"/><circle cx="13.500" cy="12" r="3" fill="none" stroke="#000" stroke-width="1.100"/><path d="M10 1l4.500 4" stroke="#000" stroke-width="1.100"/><path d="M15.500 6.500l-3.500-1 2.500-2.500z" fill="#000"/><path d="M9 8.500h3" stroke="#000" stroke-width="1.200"/></svg>
<svg class="ic" style="left:777px;top:373px" width="16" height="16" viewBox="0 0 16 16"><path d="M.5 2.500h10l5 5h-10z" fill="#fff" stroke="#000" stroke-width="1"/><path d="M.5 5.500l5 5h10M.5 8.500l5 5h10" fill="none" stroke="#000" stroke-width="1"/><path d="M1 4l4.500 4.500M1 7l4.500 4.500" stroke="#000" stroke-width=".8" stroke-dasharray="1 1"/><path d="M14 1L9 11" stroke="#f3f01f" stroke-width="2.800"/><path d="M12.800 .6L7.800 10.600M15.200 1.600L10.200 11.600" stroke="#000" stroke-width=".5"/><path d="M14.500 0l-1 2" stroke="#e01fd0" stroke-width="2.600"/><path d="M8 10l-.5 3.500 3-2.200z" fill="#000"/><path d="M6 14.500h9.500" stroke="#6f1f1f" stroke-width="1"/></svg>
<svg class="ic" style="left:777px;top:395px" width="16" height="16" viewBox="0 0 16 16"><path d="M0 1.500h8l-5 4 2 2-4 3M1 4l3 3" fill="none" stroke="#000" stroke-width="1"/><path d="M2 2.500l3 3M1.500 6l2 2" stroke="#000" stroke-width=".7" stroke-dasharray="1 1"/><circle cx="12.500" cy="2.500" r="2.300" fill="#fff" stroke="#000" stroke-width="1.100"/><path d="M10.500 4.500L6 9" stroke="#000" stroke-width="1"/><path d="M5 10.500l1-3.500 2.500 2.500z" fill="#000"/><path d="M11 6.500h3.500l1 3h-4zM11 10.500h4.500M9 13h6.500" stroke="#000" stroke-width="1" fill="none"/><rect x="0.500" y="10.500" width="4.500" height="4.500" fill="#f3f01f" stroke="#000" stroke-width=".6"/></svg>
<svg class="ic" style="left:777px;top:417px" width="16" height="16" viewBox="0 0 16 16"><path d="M0 1.500h8l-3 3M1 4l3 3" fill="none" stroke="#000" stroke-width="1"/><circle cx="13" cy="2.500" r="2.300" fill="#fff" stroke="#000" stroke-width="1.100"/><path d="M11 4.500L7.500 8" stroke="#000" stroke-width="1"/><path d="M6.500 9.500l1-3.500 2.500 2.500z" fill="#000"/><path d="M1 9l5 4.500h9.500l-4-4" fill="#f3f01f" stroke="#000" stroke-width=".8"/><path d="M1 9v2l5 4.500h9.500v-2" fill="none" stroke="#000" stroke-width=".8"/><path d="M1 5l3 3" stroke="#000" stroke-width=".7" stroke-dasharray="1 1"/></svg>
<svg class="ic" style="left:777px;top:439px" width="16" height="16" viewBox="0 0 16 16"><path d="M.5 2h9.500l5.500 4.500h-9.500z" fill="#fff" stroke="#7c7c80" stroke-width=".9"/><path d="M.5 6h9.500l5.500 4.500h-9.500z" fill="#f3f01f" stroke="#000" stroke-width="1"/><path d="M.5 8l5.500 4.500h9.500" fill="none" stroke="#000" stroke-width="1.200"/><path d="M.5 10.500l5.500 4.500h9.500" fill="none" stroke="#7c7c80" stroke-width=".9"/></svg>
<svg class="ic" style="left:777px;top:461px" width="16" height="16" viewBox="0 0 16 16"><path d="M.5 2.500h9l5.500 4h-9z" fill="#fff" stroke="#000" stroke-width=".9"/><path d="M.5 7.500h9.500l5.500 4h-9.500z" fill="#f3f01f" stroke="#000" stroke-width="1"/><path d="M.5 10.500l5.500 4.500h9.500" fill="none" stroke="#7c7c80" stroke-width=".9"/><path d="M14 1.500c1.500 2 0 4-3 5" fill="none" stroke="#000" stroke-width="1.600"/><path d="M7.500 8.500l4.500-3.500.5 3.500z" fill="#000"/><path d="M12 2a2 2 0 1 1 3 1" fill="none" stroke="#000" stroke-width="1.300"/></svg>
<svg class="ic" style="left:777px;top:483px" width="16" height="16" viewBox="0 0 16 16"><circle cx="12.500" cy="3.500" r="2.800" fill="#fff" stroke="#000" stroke-width="1.100"/><path d="M7 1L3.500 5" stroke="#000" stroke-width="1"/><path d="M2.500 6.500l1-3.500 2.500 2.500z" fill="#000"/><circle cx="5.500" cy="10" r="3.800" fill="#f3f01f" stroke="#000" stroke-width=".8"/><path d="M1.500 10.500a4 4 0 0 0 6 3.500" fill="none" stroke="#000" stroke-width="1.600"/><path d="M11 7.500h3l1.500 3h-4M10 12h5.500M8 14.500h8" stroke="#000" stroke-width="1" fill="none"/></svg>
<svg class="ic" style="left:777px;top:505px" width="16" height="16" viewBox="0 0 16 16"><rect x="0" y="-1" width="16" height="13" fill="#c9c6b9"/><ellipse cx="7.500" cy="2" rx="1.700" ry="2.200" fill="#1f1fe0"/><ellipse cx="7.800" cy="6.500" rx="1.500" ry="2" fill="#1f1fe0"/><ellipse cx="2" cy="7" rx="1.700" ry="2.200" fill="#1f1fe0"/><ellipse cx="2.300" cy="11" rx="1.500" ry="1.500" fill="#1f1fe0"/><path d="M11.500 3l3.500 6M15 9v2.500" stroke="#9c9c9c" stroke-width="1"/></svg>
</body></html>
